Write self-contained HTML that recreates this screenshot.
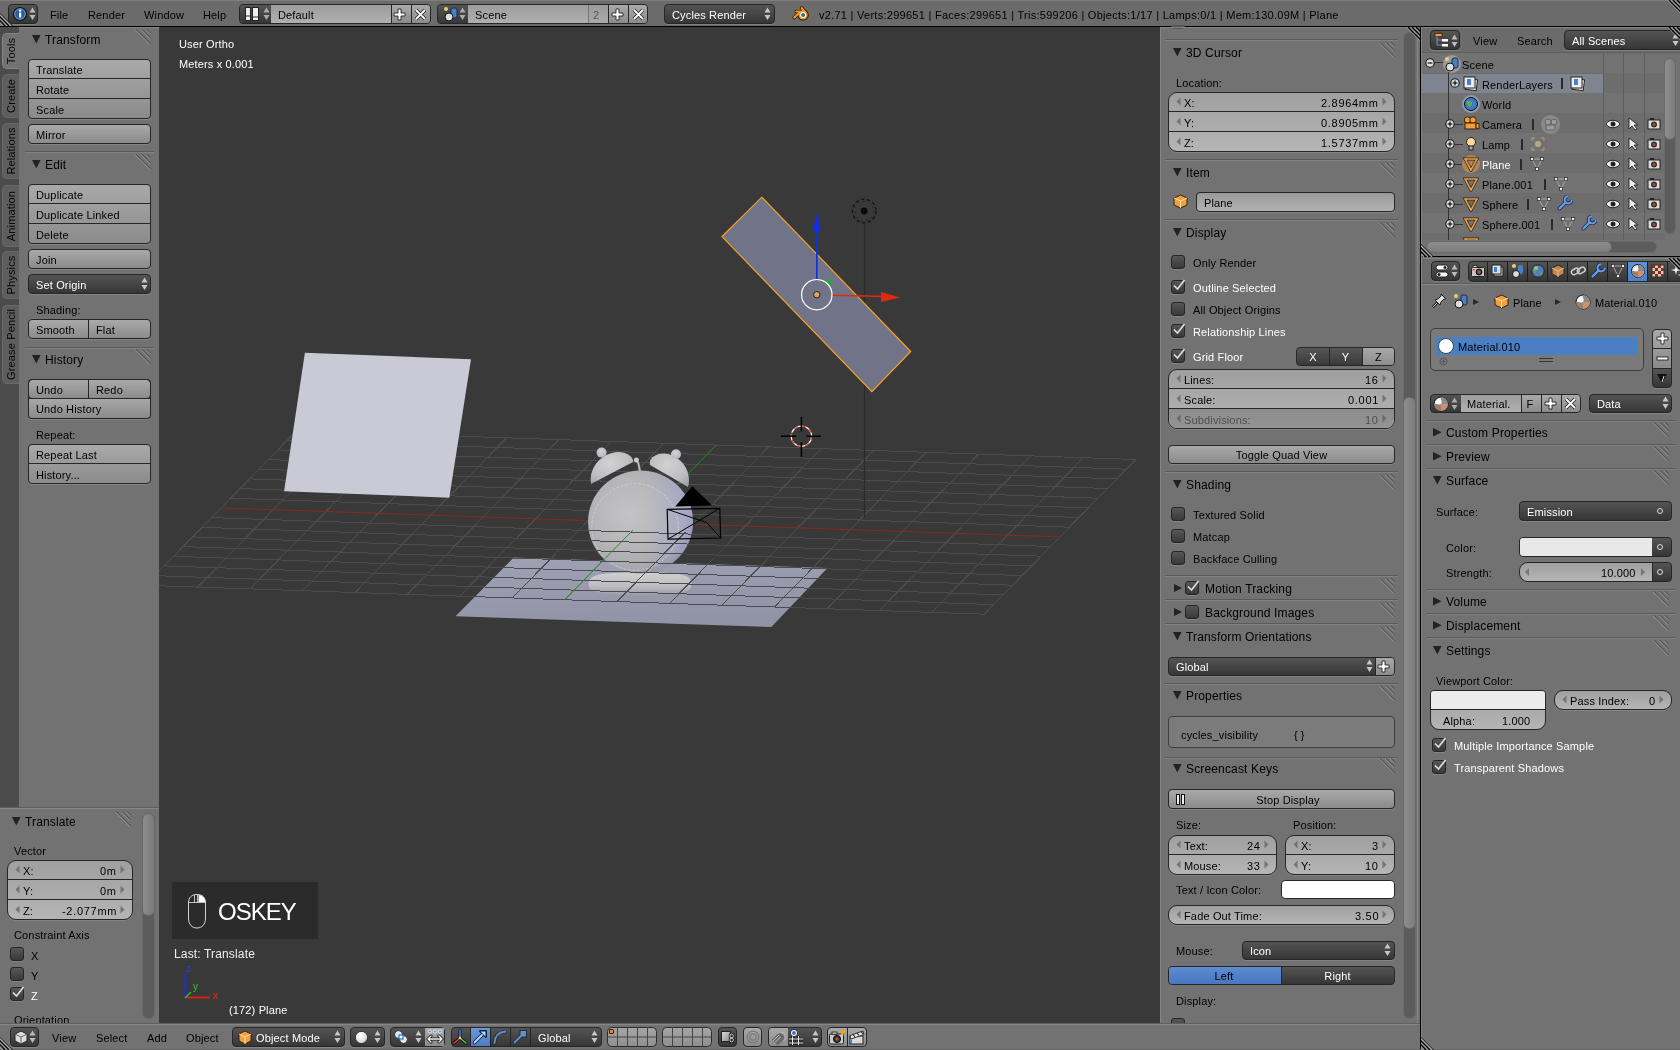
<!DOCTYPE html><html><head><meta charset='utf-8'><style>
*{box-sizing:border-box}
body{margin:0;width:1680px;height:1050px;overflow:hidden;position:relative;background:#727272;font-family:"Liberation Sans",sans-serif;font-size:11px;letter-spacing:0.15px;color:#000}
.a{position:absolute}
.t{line-height:20px;height:20px;white-space:nowrap;will-change:transform}
.w{color:#fff}
.tool{background:linear-gradient(#a9a9a9,#8b8b8b);border:1px solid #262626;border-radius:4px;box-shadow:0 1px 0 rgba(255,255,255,0.13)}
.num{background:linear-gradient(#9f9f9f,#b5b5b5);border:1px solid #262626;border-radius:9px;box-shadow:0 1px 0 rgba(255,255,255,0.13)}
.menu{background:linear-gradient(#545454,#363636);border:1px solid #262626;border-radius:4px;box-shadow:0 1px 0 rgba(255,255,255,0.13)}
.opt{background:linear-gradient(#575757,#393939);border:1px solid #262626;border-radius:3px;box-shadow:0 1px 0 rgba(255,255,255,0.13)}
.txtf{background:linear-gradient(#999,#b3b3b3);border:1px solid #262626;border-radius:4px;box-shadow:0 1px 0 rgba(255,255,255,0.13)}
.sep{height:2px;border-top:1px solid #5f5f5f;border-bottom:1px solid #848484}
</style></head><body><div class="a " style="left:0px;top:0px;width:1680px;height:26px;background:#6b6b6b;border-top:1px solid #7e7e7e"></div>
<div class="a " style="left:0px;top:26px;width:1680px;height:1px;background:#000"></div>
<div class="a " style="left:0px;top:27px;width:159px;height:780px;background:#727272"></div>
<div class="a " style="left:0px;top:27px;width:19px;height:781px;background:#4b4b4b"></div>
<div class="a " style="left:0px;top:807px;width:159px;height:216px;background:#727272"></div>
<div class="a " style="left:159px;top:27px;width:1001px;height:996px;background:#393939"></div>
<div class="a " style="left:1160px;top:27px;width:260px;height:996px;background:#727272"></div>
<div class="a " style="left:0px;top:1023px;width:1420px;height:27px;background:#727272"></div>
<div class="a " style="left:1420px;top:27px;width:1px;height:1023px;background:#000"></div>
<div class="a " style="left:1421px;top:27px;width:259px;height:229px;background:#727272"></div>
<div class="a " style="left:1421px;top:256px;width:259px;height:1px;background:#000"></div>
<div class="a " style="left:1421px;top:257px;width:259px;height:793px;background:#727272"></div>
<div class="a" style="left:2px;top:33px;width:17px;height:36px;background:#727272;border-radius:5px 0 0 5px;border:1px solid #858585;border-right:none"></div>
<div class="a t" style="left:3px;top:69px;width:36px;height:17px;line-height:17px;text-align:center;transform-origin:0 0;transform:rotate(-90deg);color:#000">Tools</div>
<div class="a" style="left:2px;top:74px;width:17px;height:44px;background:#5e5e5e;border-radius:5px 0 0 5px;border:1px solid #686868;border-right:none"></div>
<div class="a t" style="left:3px;top:118px;width:44px;height:17px;line-height:17px;text-align:center;transform-origin:0 0;transform:rotate(-90deg);color:#000">Create</div>
<div class="a" style="left:2px;top:123px;width:17px;height:56px;background:#5e5e5e;border-radius:5px 0 0 5px;border:1px solid #686868;border-right:none"></div>
<div class="a t" style="left:3px;top:179px;width:56px;height:17px;line-height:17px;text-align:center;transform-origin:0 0;transform:rotate(-90deg);color:#000">Relations</div>
<div class="a" style="left:2px;top:185px;width:17px;height:62px;background:#5e5e5e;border-radius:5px 0 0 5px;border:1px solid #686868;border-right:none"></div>
<div class="a t" style="left:3px;top:247px;width:62px;height:17px;line-height:17px;text-align:center;transform-origin:0 0;transform:rotate(-90deg);color:#000">Animation</div>
<div class="a" style="left:2px;top:251px;width:17px;height:48px;background:#5e5e5e;border-radius:5px 0 0 5px;border:1px solid #686868;border-right:none"></div>
<div class="a t" style="left:3px;top:299px;width:48px;height:17px;line-height:17px;text-align:center;transform-origin:0 0;transform:rotate(-90deg);color:#000">Physics</div>
<div class="a" style="left:2px;top:305px;width:17px;height:79px;background:#5e5e5e;border-radius:5px 0 0 5px;border:1px solid #686868;border-right:none"></div>
<div class="a t" style="left:3px;top:384px;width:79px;height:17px;line-height:17px;text-align:center;transform-origin:0 0;transform:rotate(-90deg);color:#000">Grease Pencil</div>
<svg class="a" style="left:32px;top:35px" width="9.6" height="9.6"><polygon points="0,0 8.6,0 4.3,8.6" fill="#222"/></svg>
<div class="a t " style="left:45px;top:30px;font-size:12px">Transform</div>
<svg class="a" style="left:134px;top:28px" width="18" height="18"><g stroke="#555" stroke-width="1"><line x1="2" y1="1" x2="17" y2="16"/><line x1="8" y1="1" x2="17" y2="10"/><line x1="13" y1="1" x2="17" y2="5"/></g><g stroke="#8a8a8a" stroke-width="1"><line x1="1" y1="2" x2="16" y2="17"/><line x1="7" y1="2" x2="16" y2="11"/><line x1="12" y1="2" x2="16" y2="6"/></g></svg>
<div class="a tool" style="left:28px;top:59px;width:123px;height:60px"></div>
<div class="a t " style="left:36px;top:60px;">Translate</div>
<div class="a " style="left:28px;top:78px;width:123px;height:1px;background:#262626"></div>
<div class="a t " style="left:36px;top:80px;">Rotate</div>
<div class="a " style="left:28px;top:98px;width:123px;height:1px;background:#262626"></div>
<div class="a t " style="left:36px;top:100px;">Scale</div>
<div class="a tool" style="left:28px;top:124px;width:123px;height:20px"></div>
<div class="a t " style="left:36px;top:125px;">Mirror</div>
<div class="a" style="left:25px;top:151px;width:129px;height:1px;background:#5a5a5a"></div><div class="a" style="left:25px;top:152px;width:129px;height:1px;background:#828282"></div>
<svg class="a" style="left:32px;top:160px" width="9.6" height="9.6"><polygon points="0,0 8.6,0 4.3,8.6" fill="#222"/></svg>
<div class="a t " style="left:45px;top:155px;font-size:12px">Edit</div>
<svg class="a" style="left:134px;top:153px" width="18" height="18"><g stroke="#555" stroke-width="1"><line x1="2" y1="1" x2="17" y2="16"/><line x1="8" y1="1" x2="17" y2="10"/><line x1="13" y1="1" x2="17" y2="5"/></g><g stroke="#8a8a8a" stroke-width="1"><line x1="1" y1="2" x2="16" y2="17"/><line x1="7" y1="2" x2="16" y2="11"/><line x1="12" y1="2" x2="16" y2="6"/></g></svg>
<div class="a tool" style="left:28px;top:184px;width:123px;height:60px"></div>
<div class="a t " style="left:36px;top:185px;">Duplicate</div>
<div class="a " style="left:28px;top:203px;width:123px;height:1px;background:#262626"></div>
<div class="a t " style="left:36px;top:205px;">Duplicate Linked</div>
<div class="a " style="left:28px;top:223px;width:123px;height:1px;background:#262626"></div>
<div class="a t " style="left:36px;top:225px;">Delete</div>
<div class="a tool" style="left:28px;top:249px;width:123px;height:20px"></div>
<div class="a t " style="left:36px;top:250px;">Join</div>
<div class="a menu" style="left:28px;top:274px;width:123px;height:20px"></div>
<div class="a t w" style="left:36px;top:275px;">Set Origin</div>
<svg class="a" style="left:141px;top:277px" width="7" height="14"><polygon points="0.5,5.5 3.5,0.5 6.5,5.5" fill="#c8c8c8"/><polygon points="0.5,8 3.5,13 6.5,8" fill="#c8c8c8"/></svg>
<div class="a t " style="left:36px;top:300px;">Shading:</div>
<div class="a tool" style="left:28px;top:319px;width:123px;height:20px"></div>
<div class="a t " style="left:36px;top:320px;">Smooth</div>
<div class="a " style="left:88px;top:319px;width:1px;height:20px;background:#262626"></div>
<div class="a t " style="left:96px;top:320px;">Flat</div>
<div class="a" style="left:25px;top:347px;width:129px;height:1px;background:#5a5a5a"></div><div class="a" style="left:25px;top:348px;width:129px;height:1px;background:#828282"></div>
<svg class="a" style="left:32px;top:355px" width="9.6" height="9.6"><polygon points="0,0 8.6,0 4.3,8.6" fill="#222"/></svg>
<div class="a t " style="left:45px;top:350px;font-size:12px">History</div>
<svg class="a" style="left:134px;top:348px" width="18" height="18"><g stroke="#555" stroke-width="1"><line x1="2" y1="1" x2="17" y2="16"/><line x1="8" y1="1" x2="17" y2="10"/><line x1="13" y1="1" x2="17" y2="5"/></g><g stroke="#8a8a8a" stroke-width="1"><line x1="1" y1="2" x2="16" y2="17"/><line x1="7" y1="2" x2="16" y2="11"/><line x1="12" y1="2" x2="16" y2="6"/></g></svg>
<div class="a tool" style="left:28px;top:379px;width:123px;height:20px"></div>
<div class="a t " style="left:36px;top:380px;">Undo</div>
<div class="a " style="left:88px;top:379px;width:1px;height:20px;background:#262626"></div>
<div class="a t " style="left:96px;top:380px;">Redo</div>
<div class="a " style="left:28px;top:398px;width:123px;height:1px;background:#262626"></div>
<div class="a tool" style="left:28px;top:398px;width:123px;height:21px;border-top:none;border-radius:0 0 4px 4px"></div>
<div class="a tool" style="left:28px;top:379px;width:123px;height:20px;border-radius:4px 4px 0 0;background:transparent;box-shadow:none"></div>
<div class="a t " style="left:36px;top:399px;">Undo History</div>
<div class="a t " style="left:36px;top:425px;">Repeat:</div>
<div class="a tool" style="left:28px;top:444px;width:123px;height:40px"></div>
<div class="a t " style="left:36px;top:445px;">Repeat Last</div>
<div class="a " style="left:28px;top:463px;width:123px;height:1px;background:#262626"></div>
<div class="a t " style="left:36px;top:465px;">History...</div>
<div class="a " style="left:0px;top:807px;width:159px;height:1px;background:#5e5e5e"></div>
<div class="a " style="left:0px;top:808px;width:159px;height:1px;background:#888"></div>
<svg class="a" style="left:12px;top:817px" width="9.6" height="9.6"><polygon points="0,0 8.6,0 4.3,8.6" fill="#222"/></svg>
<div class="a t " style="left:25px;top:812px;font-size:12px">Translate</div>
<svg class="a" style="left:114px;top:810px" width="18" height="18"><g stroke="#555" stroke-width="1"><line x1="2" y1="1" x2="17" y2="16"/><line x1="8" y1="1" x2="17" y2="10"/><line x1="13" y1="1" x2="17" y2="5"/></g><g stroke="#8a8a8a" stroke-width="1"><line x1="1" y1="2" x2="16" y2="17"/><line x1="7" y1="2" x2="16" y2="11"/><line x1="12" y1="2" x2="16" y2="6"/></g></svg>
<div class="a" style="left:142px;top:813px;width:13px;height:206px;border-radius:6px;background:#5c5c5c;border:1px solid #6a6a6a"></div>
<div class="a" style="left:142px;top:813px;width:13px;height:103px;border-radius:6px;background:linear-gradient(90deg,#8c8c8c,#7a7a7a);border:1px solid #666"></div>
<div class="a t " style="left:14px;top:841px;">Vector</div>
<div class="a num" style="left:7px;top:860px;width:126px;height:60px;overflow:hidden"></div>
<svg class="a" style="left:15px;top:865px" width="6" height="9"><polygon points="4.5,0.5 0.5,4.5 4.5,8.5" fill="#747474"/></svg>
<svg class="a" style="left:120px;top:865px" width="6" height="9"><polygon points="0.5,0.5 4.5,4.5 0.5,8.5" fill="#747474"/></svg>
<div class="a t " style="left:23px;top:861px;">X:</div>
<div class="a t " style="right:1563px;top:861px;;letter-spacing:0.7px">0m</div>
<div class="a " style="left:7px;top:879px;width:126px;height:1px;background:#262626"></div>
<svg class="a" style="left:15px;top:885px" width="6" height="9"><polygon points="4.5,0.5 0.5,4.5 4.5,8.5" fill="#747474"/></svg>
<svg class="a" style="left:120px;top:885px" width="6" height="9"><polygon points="0.5,0.5 4.5,4.5 0.5,8.5" fill="#747474"/></svg>
<div class="a t " style="left:23px;top:881px;">Y:</div>
<div class="a t " style="right:1563px;top:881px;;letter-spacing:0.7px">0m</div>
<div class="a " style="left:7px;top:899px;width:126px;height:1px;background:#262626"></div>
<svg class="a" style="left:15px;top:905px" width="6" height="9"><polygon points="4.5,0.5 0.5,4.5 4.5,8.5" fill="#747474"/></svg>
<svg class="a" style="left:120px;top:905px" width="6" height="9"><polygon points="0.5,0.5 4.5,4.5 0.5,8.5" fill="#747474"/></svg>
<div class="a t " style="left:23px;top:901px;">Z:</div>
<div class="a t " style="right:1563px;top:901px;;letter-spacing:0.7px">-2.077mm</div>
<div class="a t " style="left:14px;top:925px;">Constraint Axis</div>
<div class="a opt" style="left:10px;top:947px;width:14px;height:14px"></div>
<div class="a t " style="left:31px;top:946px;">X</div>
<div class="a opt" style="left:10px;top:967px;width:14px;height:14px"></div>
<div class="a t " style="left:31px;top:966px;">Y</div>
<div class="a opt" style="left:10px;top:987px;width:14px;height:14px"></div>
<svg class="a" style="left:10px;top:985px" width="16" height="16"><polyline points="3,7.5 6.5,11 13.5,2" fill="none" stroke="#dcdcdc" stroke-width="1.7"/></svg>
<div class="a t w" style="left:31px;top:986px;">Z</div>
<div class="a t " style="left:14px;top:1010px;">Orientation</div>
<div class="a " style="left:0px;top:1023px;width:159px;height:1px;background:#727272"></div>
<div class="a menu" style="left:8px;top:4px;width:30px;height:20px"></div>
<svg class="a" style="left:12px;top:6px" width="16" height="16"><circle cx="8" cy="8" r="6.5" fill="#2a5f9e" stroke="#111" stroke-width="1.2"/><circle cx="8" cy="8" r="5.3" fill="none" stroke="#7fa6d6" stroke-width="0.8"/><rect x="7" y="6.5" width="2.2" height="5" fill="#fff"/><circle cx="8.1" cy="4.6" r="1.2" fill="#fff"/></svg>
<svg class="a" style="left:29px;top:7px" width="7" height="14"><polygon points="0.5,5.5 3.5,0.5 6.5,5.5" fill="#bbb"/><polygon points="0.5,8 3.5,13 6.5,8" fill="#bbb"/></svg>
<div class="a t " style="left:50px;top:5px;">File</div>
<div class="a t " style="left:88px;top:5px;">Render</div>
<div class="a t " style="left:144px;top:5px;">Window</div>
<div class="a t " style="left:203px;top:5px;">Help</div>
<div class="a" style="left:239px;top:4px;width:192px;height:20px;border:1px solid #262626;border-radius:4px;overflow:hidden;background:#444"><div class="a" style="left:0;top:0;width:31px;height:18px;background:linear-gradient(#545454,#363636)"></div><div class="a" style="left:31px;top:0;width:120px;height:18px;background:linear-gradient(#9c9c9c,#b0b0b0)"></div><div class="a" style="left:151px;top:0;width:1px;height:18px;background:#262626"></div><div class="a" style="left:152px;top:0;width:19px;height:18px;background:linear-gradient(#a9a9a9,#8b8b8b)"></div><div class="a" style="left:171px;top:0;width:1px;height:18px;background:#262626"></div><div class="a" style="left:172px;top:0;width:20px;height:18px;background:linear-gradient(#a9a9a9,#8b8b8b)"></div></div>
<svg class="a" style="left:245px;top:7px" width="14" height="14"><rect x="0.5" y="0.5" width="5" height="13" fill="#eee" stroke="#222"/><rect x="7.5" y="0.5" width="6" height="13" fill="#eee" stroke="#222"/><line x1="1" y1="9" x2="5" y2="9" stroke="#333"/><line x1="8" y1="10" x2="13" y2="10" stroke="#333"/></svg>
<svg class="a" style="left:263px;top:7px" width="7" height="14"><polygon points="0.5,5.5 3.5,0.5 6.5,5.5" fill="#aaa"/><polygon points="0.5,8 3.5,13 6.5,8" fill="#aaa"/></svg>
<div class="a t " style="left:278px;top:5px;">Default</div>
<svg class="a" style="left:393px;top:8px" width="13" height="13"><path d="M5 1h3v4h4v3h-4v4h-3v-4h-4v-3h4z" fill="#fff" stroke="#222" stroke-width="0.9"/></svg>
<svg class="a" style="left:414px;top:8px" width="13" height="13"><path d="M2 2L11 11M11 2L2 11" stroke="#222" stroke-width="3.4"/><path d="M2 2L11 11M11 2L2 11" stroke="#fff" stroke-width="1.8"/></svg>
<div class="a" style="left:437px;top:4px;width:211px;height:20px;border:1px solid #262626;border-radius:4px;overflow:hidden;background:#444"><div class="a" style="left:0;top:0;width:30px;height:18px;background:linear-gradient(#545454,#363636)"></div><div class="a" style="left:30px;top:0;width:120px;height:18px;background:linear-gradient(#9c9c9c,#b0b0b0)"></div><div class="a" style="left:150px;top:0;width:20px;height:18px;background:linear-gradient(#9a9a9a,#aaaaaa)"></div><div class="a" style="left:150px;top:0;width:1px;height:18px;background:#777"></div><div class="a" style="left:170px;top:0;width:1px;height:18px;background:#262626"></div><div class="a" style="left:171px;top:0;width:19px;height:18px;background:linear-gradient(#a9a9a9,#8b8b8b)"></div><div class="a" style="left:190px;top:0;width:1px;height:18px;background:#262626"></div><div class="a" style="left:191px;top:0;width:20px;height:18px;background:linear-gradient(#a9a9a9,#8b8b8b)"></div></div>
<svg class="a" style="left:443px;top:6px" width="16" height="16"><circle cx="3" cy="3" r="2" fill="#e8d070"/><rect x="8" y="2" width="6" height="10" rx="2" fill="#4c7fc0" stroke="#1a2a50"/><circle cx="6" cy="11" r="4" fill="#ddd" stroke="#111"/></svg>
<svg class="a" style="left:459px;top:7px" width="7" height="14"><polygon points="0.5,5.5 3.5,0.5 6.5,5.5" fill="#aaa"/><polygon points="0.5,8 3.5,13 6.5,8" fill="#aaa"/></svg>
<div class="a t " style="left:475px;top:5px;">Scene</div>
<div class="a t " style="left:593px;top:5px;color:#555">2</div>
<svg class="a" style="left:611px;top:8px" width="13" height="13"><path d="M5 1h3v4h4v3h-4v4h-3v-4h-4v-3h4z" fill="#fff" stroke="#222" stroke-width="0.9"/></svg>
<svg class="a" style="left:632px;top:8px" width="13" height="13"><path d="M2 2L11 11M11 2L2 11" stroke="#222" stroke-width="3.4"/><path d="M2 2L11 11M11 2L2 11" stroke="#fff" stroke-width="1.8"/></svg>
<div class="a menu" style="left:664px;top:4px;width:111px;height:20px"></div>
<div class="a t w" style="left:672px;top:5px;">Cycles Render</div>
<svg class="a" style="left:764px;top:7px" width="7" height="14"><polygon points="0.5,5.5 3.5,0.5 6.5,5.5" fill="#c8c8c8"/><polygon points="0.5,8 3.5,13 6.5,8" fill="#c8c8c8"/></svg>
<svg class="a" style="left:788px;top:2px" width="24" height="24"><g stroke="#2a1500" stroke-linecap="round" fill="none"><path d="M13.7 6.2 L17 10" stroke-width="3.6"/><path d="M8.2 9.4 L13 9.6" stroke-width="3.4"/><path d="M6.2 15.5 L11 11" stroke-width="3.6"/><circle cx="15.1" cy="13" r="5" stroke-width="1.2" fill="#2a1500"/></g><g stroke="#f39a1c" stroke-linecap="round" fill="none"><path d="M13.7 6.2 L17 10" stroke-width="2.2"/><path d="M8.2 9.4 L13 9.6" stroke-width="2"/><path d="M6.2 15.5 L11 11" stroke-width="2.2"/></g><circle cx="15.1" cy="13" r="4.6" fill="#f39a1c"/><circle cx="15.1" cy="13" r="2.9" fill="#fff"/><circle cx="15.1" cy="13" r="1.9" fill="#2a64b0"/></svg>
<div class="a t " style="left:819px;top:5px;letter-spacing:0.27px">v2.71 | Verts:299651 | Faces:299651 | Tris:599206 | Objects:1/17 | Lamps:0/1 | Mem:130.09M | Plane</div>
<svg class="a" style="left:159px;top:27px" width="1001" height="996" viewBox="159 27 1001 996"><defs><linearGradient id="gp" x1="0" y1="0" x2="0.3" y2="1"><stop offset="0" stop-color="#a0a1b5"/><stop offset="1" stop-color="#9193a6"/></linearGradient><radialGradient id="gb" cx="0.42" cy="0.38" r="0.65"><stop offset="0" stop-color="#d6d6d8"/><stop offset="0.6" stop-color="#b9b9bc"/><stop offset="0.9" stop-color="#9c9ca4"/><stop offset="1" stop-color="#8a8a96"/></radialGradient><radialGradient id="gd" cx="0.4" cy="0.3" r="0.8"><stop offset="0" stop-color="#dcdcde"/><stop offset="0.7" stop-color="#b4b4b8"/><stop offset="1" stop-color="#8e8e98"/></radialGradient><linearGradient id="gbase" x1="0" y1="0" x2="0" y2="1"><stop offset="0" stop-color="#c8c8cc"/><stop offset="1" stop-color="#a8a8b0"/></linearGradient></defs><polygon points="455.5,616.3 513.8,557.5 827.5,568 771.3,627" fill="url(#gp)"/><g stroke="#4c4c4c" stroke-width="1" shape-rendering="crispEdges"><line x1="145.1" y1="585.3" x2="984.2" y2="614.2"/><line x1="145.1" y1="585.3" x2="296.8" y2="430.6"/><line x1="154.6" y1="575.6" x2="993.7" y2="604.6"/><line x1="197.6" y1="587.1" x2="349.3" y2="432.4"/><line x1="164.1" y1="565.9" x2="1003.1" y2="594.9"/><line x1="250.0" y1="588.9" x2="401.7" y2="434.2"/><line x1="173.6" y1="556.3" x2="1012.6" y2="585.2"/><line x1="302.5" y1="590.7" x2="454.1" y2="436.0"/><line x1="183.1" y1="546.6" x2="1022.1" y2="575.6"/><line x1="354.9" y1="592.5" x2="506.6" y2="437.8"/><line x1="192.5" y1="536.9" x2="1031.6" y2="565.9"/><line x1="407.3" y1="594.3" x2="559.0" y2="439.6"/><line x1="202.0" y1="527.3" x2="1041.1" y2="556.2"/><line x1="459.8" y1="596.1" x2="611.5" y2="441.4"/><line x1="211.5" y1="517.6" x2="1050.5" y2="546.5"/><line x1="512.2" y1="598.0" x2="663.9" y2="443.2"/><line x1="230.5" y1="498.2" x2="1069.5" y2="527.2"/><line x1="617.1" y1="601.6" x2="768.8" y2="446.8"/><line x1="239.9" y1="488.6" x2="1079.0" y2="517.5"/><line x1="669.5" y1="603.4" x2="821.2" y2="448.7"/><line x1="249.4" y1="478.9" x2="1088.5" y2="507.9"/><line x1="722.0" y1="605.2" x2="873.7" y2="450.5"/><line x1="258.9" y1="469.2" x2="1097.9" y2="498.2"/><line x1="774.4" y1="607.0" x2="926.1" y2="452.3"/><line x1="268.4" y1="459.6" x2="1107.4" y2="488.5"/><line x1="826.9" y1="608.8" x2="978.5" y2="454.1"/><line x1="277.9" y1="449.9" x2="1116.9" y2="478.9"/><line x1="879.3" y1="610.6" x2="1031.0" y2="455.9"/><line x1="287.3" y1="440.2" x2="1126.4" y2="469.2"/><line x1="931.7" y1="612.4" x2="1083.4" y2="457.7"/><line x1="296.8" y1="430.6" x2="1135.9" y2="459.5"/><line x1="984.2" y1="614.2" x2="1135.9" y2="459.5"/></g><line x1="221.0" y1="507.9" x2="1060.0" y2="536.9" stroke="#8a2a22" stroke-width="1"/><line x1="564.7" y1="599.8" x2="716.3" y2="445.0" stroke="#2a8a2a" stroke-width="1"/><defs><radialGradient id="gb2" cx="0.4" cy="0.42" r="0.62"><stop offset="0" stop-color="#c4c4c6"/><stop offset="0.55" stop-color="#b6b6b9"/><stop offset="0.85" stop-color="#a9a9b0"/><stop offset="1" stop-color="#9090a0"/></radialGradient><linearGradient id="gbl" x1="0" y1="0" x2="1" y2="0"><stop offset="0.55" stop-color="#a8a8d8" stop-opacity="0"/><stop offset="1" stop-color="#a8a8e0" stop-opacity="0.55"/></linearGradient><linearGradient id="gbase2" x1="0" y1="0" x2="0" y2="1"><stop offset="0" stop-color="#cfcfd2"/><stop offset="0.6" stop-color="#bdbdc2"/><stop offset="1" stop-color="#9c9caa"/></linearGradient><radialGradient id="gd2" cx="0.45" cy="0.35" r="0.75"><stop offset="0" stop-color="#d2d2d4"/><stop offset="0.7" stop-color="#bcbcc0"/><stop offset="1" stop-color="#a0a0aa"/></radialGradient></defs><path d="M588.6,584 C589,574 600,572.5 640,572.5 C680,572.5 691.5,574 691.5,584 C691.5,592 684,595 640,595 C596,595 588.6,592 588.6,584 Z" fill="url(#gbase2)"/><ellipse cx="640.5" cy="522" rx="52.5" ry="51.5" fill="url(#gb2)"/><ellipse cx="640.5" cy="522" rx="52.5" ry="51.5" fill="url(#gbl)"/><circle cx="635" cy="527" r="43.3" fill="none" stroke="#d0d0d2" stroke-width="0.8" stroke-dasharray="3,1.5"/><path d="M591,484 C588,466 604,452 618,452 C628,452 634,458 633,462 Z" fill="url(#gd2)"/><path d="M650,465 C648,456 660,452 668,454 C684,458 692,474 688,487 Z" fill="url(#gd2)"/><line x1="638" y1="462" x2="640" y2="471" stroke="#bbb" stroke-width="2"/><circle cx="601.6" cy="452.6" r="5" fill="url(#gd2)"/><circle cx="676" cy="454.3" r="5" fill="url(#gd2)"/><circle cx="636.4" cy="460" r="2.5" fill="#ccc"/><g stroke="#4c4c4c" stroke-width="1" shape-rendering="crispEdges"><line x1="145.1" y1="585.3" x2="984.2" y2="614.2"/><line x1="145.1" y1="585.3" x2="213.4" y2="515.7"/><line x1="154.6" y1="575.6" x2="993.7" y2="604.6"/><line x1="197.6" y1="587.1" x2="265.8" y2="517.5"/><line x1="164.1" y1="565.9" x2="1003.1" y2="594.9"/><line x1="250.0" y1="588.9" x2="318.3" y2="519.3"/><line x1="173.6" y1="556.3" x2="1012.6" y2="585.2"/><line x1="302.5" y1="590.7" x2="370.7" y2="521.1"/><line x1="183.1" y1="546.6" x2="1022.1" y2="575.6"/><line x1="354.9" y1="592.5" x2="423.2" y2="522.9"/><line x1="192.5" y1="536.9" x2="1031.6" y2="565.9"/><line x1="407.3" y1="594.3" x2="475.6" y2="524.7"/><line x1="202.0" y1="527.3" x2="1041.1" y2="556.2"/><line x1="459.8" y1="596.1" x2="528.0" y2="526.5"/><line x1="211.5" y1="517.6" x2="1050.5" y2="546.5"/><line x1="512.2" y1="598.0" x2="580.5" y2="528.3"/><line x1="617.1" y1="601.6" x2="685.4" y2="531.9"/><line x1="669.5" y1="603.4" x2="737.8" y2="533.8"/><line x1="722.0" y1="605.2" x2="790.2" y2="535.6"/><line x1="774.4" y1="607.0" x2="842.7" y2="537.4"/><line x1="826.9" y1="608.8" x2="895.1" y2="539.2"/><line x1="879.3" y1="610.6" x2="947.6" y2="541.0"/><line x1="931.7" y1="612.4" x2="1000.0" y2="542.8"/><line x1="984.2" y1="614.2" x2="1052.4" y2="544.6"/></g><line x1="564.7" y1="599.8" x2="632.9" y2="530.1" stroke="#2a8a2a" stroke-width="1"/><polygon points="304.9,352.8 471,359.3 449.3,497.7 284.1,491.2" fill="#c9cad6"/><polygon points="675.3,506.4 692.3,486.2 712.2,505.6" fill="#000"/><polygon points="667.2,509.3 719.8,508.3 720.6,538 668,539.1" fill="none" stroke="#000" stroke-width="1.2"/><polyline points="667.2,509.3 706.8,522.6 720.6,538" fill="none" stroke="#000" stroke-width="1"/><line x1="668" y1="539.1" x2="719.8" y2="508.3" stroke="#000" stroke-width="1"/><line x1="864.5" y1="223" x2="864.5" y2="517" stroke="#2a2a2a" stroke-width="1.2"/><polygon points="761.8,197.2 910.7,351.5 871.9,391.7 722,236.6" fill="#717489" stroke="#ffa51c" stroke-width="1.15"/><line x1="816.8" y1="280" x2="816.8" y2="228" stroke="#1030e0" stroke-width="1.6"/><polygon points="812.5,231 816.8,213 821,231" fill="#1030e0"/><line x1="832" y1="295.2" x2="885" y2="296.5" stroke="#e02a10" stroke-width="1.6"/><polygon points="881,292 900,297.4 881,302" fill="#e02a10"/><circle cx="829" cy="282.3" r="3.6" fill="#3a9a50"/><circle cx="816.8" cy="294.7" r="15.2" fill="none" stroke="#fff" stroke-width="1.2"/><circle cx="816.8" cy="294.7" r="3.2" fill="#e8a060" stroke="#222" stroke-width="1"/><circle cx="864.2" cy="211" r="11.8" fill="none" stroke="#111" stroke-width="1.3" stroke-dasharray="3.2,2.6"/><circle cx="864.2" cy="211" r="9.6" fill="none" stroke="#1a1a1a" stroke-width="0.8" stroke-dasharray="1.5,4"/><circle cx="864.2" cy="211" r="3.4" fill="#0a0a0a"/><circle cx="801.4" cy="436.2" r="10.2" fill="none" stroke="#fff" stroke-width="1.1"/><circle cx="801.4" cy="436.2" r="10.2" fill="none" stroke="#f02a10" stroke-width="1.1" stroke-dasharray="4,4"/><g stroke="#000" stroke-width="1.5"><line x1="781" y1="436.2" x2="796" y2="436.2"/><line x1="806.5" y1="436.2" x2="821" y2="436.2"/><line x1="801.4" y1="417" x2="801.4" y2="431.5"/><line x1="801.4" y1="442" x2="801.4" y2="457"/></g></svg>
<div class="a t w" style="left:179px;top:34px;">User Ortho</div>
<div class="a t w" style="left:179px;top:54px;">Meters x 0.001</div>
<div class="a " style="left:172px;top:882px;width:146px;height:57px;background:#2b2b2b"></div>
<svg class="a" style="left:186px;top:892px" width="22" height="38"><path d="M11 2.5 C16.5 2.5 19.5 5.5 19.5 11 L19.5 26 C19.5 32.5 16 36 11 36 C6 36 2.5 32.5 2.5 26 L2.5 11 C2.5 5.5 5.5 2.5 11 2.5 Z" fill="none" stroke="#e8e8e8" stroke-width="0.9"/><path d="M2.6 10.5 L19.4 10.5 M8.5 3 L8.5 10.5 M11.5 3 L11.5 10.5" stroke="#e8e8e8" stroke-width="0.8" fill="none"/><path d="M12.5 3 C16.5 3.2 19 5.5 19.2 10 L12.5 10 Z" fill="#fff"/></svg>
<div class="a t w" style="left:218px;top:907px;font-size:24px;letter-spacing:-1px;line-height:30px;height:30px;top:897px">OSKEY</div>
<div class="a t " style="left:174px;top:944px;font-size:12px;color:#eee">Last: Translate</div>
<svg class="a" style="left:180px;top:963px" width="45" height="40"><line x1="5.5" y1="10" x2="5.5" y2="35" stroke="#1c2ce0" stroke-width="2"/><line x1="5" y1="34.5" x2="30" y2="34.5" stroke="#d8200e" stroke-width="2"/><line x1="5" y1="35" x2="11" y2="29" stroke="#20c020" stroke-width="1.5"/><text x="6" y="9" font-size="10" fill="#2a3ae8" font-family="Liberation Sans">z</text><text x="13" y="27" font-size="10" fill="#2ac82a" font-family="Liberation Sans">y</text><text x="33" y="36" font-size="10" fill="#e0301a" font-family="Liberation Sans">x</text></svg>
<div class="a t w" style="left:229px;top:1000px;">(172) Plane</div>
<div class="a " style="left:1160px;top:27px;width:1px;height:996px;background:#858585"></div>
<div class="a" style="left:1171px;top:25px;width:14px;height:4px;background:#555;border-radius:0 0 4px 4px"></div>
<div class="a" style="left:1403px;top:32px;width:13px;height:987px;border-radius:6px;background:#5c5c5c;border:1px solid #6c6c6c"></div>
<div class="a" style="left:1403px;top:397px;width:13px;height:532px;border-radius:6px;background:linear-gradient(90deg,#8e8e8e,#7c7c7c);border:1px solid #6a6a6a"></div>
<div class="a " style="left:1417px;top:27px;width:1px;height:996px;background:#858585"></div>
<div class="a" style="left:1165px;top:39px;width:233px;height:1px;background:#5a5a5a"></div><div class="a" style="left:1165px;top:40px;width:233px;height:1px;background:#828282"></div>
<svg class="a" style="left:1173px;top:48px" width="9.6" height="9.6"><polygon points="0,0 8.6,0 4.3,8.6" fill="#222"/></svg>
<div class="a t " style="left:1186px;top:43px;font-size:12px">3D Cursor</div>
<svg class="a" style="left:1378px;top:41px" width="18" height="18"><g stroke="#555" stroke-width="1"><line x1="2" y1="1" x2="17" y2="16"/><line x1="8" y1="1" x2="17" y2="10"/><line x1="13" y1="1" x2="17" y2="5"/></g><g stroke="#8a8a8a" stroke-width="1"><line x1="1" y1="2" x2="16" y2="17"/><line x1="7" y1="2" x2="16" y2="11"/><line x1="12" y1="2" x2="16" y2="6"/></g></svg>
<div class="a t " style="left:1176px;top:73px;">Location:</div>
<div class="a num" style="left:1168px;top:92px;width:227px;height:60px;overflow:hidden"></div>
<svg class="a" style="left:1176px;top:97px" width="6" height="9"><polygon points="4.5,0.5 0.5,4.5 4.5,8.5" fill="#747474"/></svg>
<svg class="a" style="left:1382px;top:97px" width="6" height="9"><polygon points="0.5,0.5 4.5,4.5 0.5,8.5" fill="#747474"/></svg>
<div class="a t " style="left:1184px;top:93px;">X:</div>
<div class="a t " style="right:301px;top:93px;;letter-spacing:0.7px">2.8964mm</div>
<div class="a " style="left:1168px;top:111px;width:227px;height:1px;background:#262626"></div>
<svg class="a" style="left:1176px;top:117px" width="6" height="9"><polygon points="4.5,0.5 0.5,4.5 4.5,8.5" fill="#747474"/></svg>
<svg class="a" style="left:1382px;top:117px" width="6" height="9"><polygon points="0.5,0.5 4.5,4.5 0.5,8.5" fill="#747474"/></svg>
<div class="a t " style="left:1184px;top:113px;">Y:</div>
<div class="a t " style="right:301px;top:113px;;letter-spacing:0.7px">0.8905mm</div>
<div class="a " style="left:1168px;top:131px;width:227px;height:1px;background:#262626"></div>
<svg class="a" style="left:1176px;top:137px" width="6" height="9"><polygon points="4.5,0.5 0.5,4.5 4.5,8.5" fill="#747474"/></svg>
<svg class="a" style="left:1382px;top:137px" width="6" height="9"><polygon points="0.5,0.5 4.5,4.5 0.5,8.5" fill="#747474"/></svg>
<div class="a t " style="left:1184px;top:133px;">Z:</div>
<div class="a t " style="right:301px;top:133px;;letter-spacing:0.7px">1.5737mm</div>
<div class="a" style="left:1165px;top:159px;width:233px;height:1px;background:#5a5a5a"></div><div class="a" style="left:1165px;top:160px;width:233px;height:1px;background:#828282"></div>
<svg class="a" style="left:1173px;top:168px" width="9.6" height="9.6"><polygon points="0,0 8.6,0 4.3,8.6" fill="#222"/></svg>
<div class="a t " style="left:1186px;top:163px;font-size:12px">Item</div>
<svg class="a" style="left:1378px;top:161px" width="18" height="18"><g stroke="#555" stroke-width="1"><line x1="2" y1="1" x2="17" y2="16"/><line x1="8" y1="1" x2="17" y2="10"/><line x1="13" y1="1" x2="17" y2="5"/></g><g stroke="#8a8a8a" stroke-width="1"><line x1="1" y1="2" x2="16" y2="17"/><line x1="7" y1="2" x2="16" y2="11"/><line x1="12" y1="2" x2="16" y2="6"/></g></svg>
<svg class="a" style="left:1173px;top:194px" width="15" height="15"><path d="M7.5 1 L14 4 L14 11 L7.5 14 L1 11 L1 4 Z" fill="#f0a040" stroke="#3a2000"/><path d="M1 4 L7.5 7 L14 4 M7.5 7 L7.5 14" stroke="#fde0b0" fill="none"/></svg>
<div class="a txtf" style="left:1196px;top:192px;width:199px;height:20px"></div>
<div class="a t " style="left:1204px;top:193px;">Plane</div>
<div class="a" style="left:1165px;top:219px;width:233px;height:1px;background:#5a5a5a"></div><div class="a" style="left:1165px;top:220px;width:233px;height:1px;background:#828282"></div>
<svg class="a" style="left:1173px;top:228px" width="9.6" height="9.6"><polygon points="0,0 8.6,0 4.3,8.6" fill="#222"/></svg>
<div class="a t " style="left:1186px;top:223px;font-size:12px">Display</div>
<svg class="a" style="left:1378px;top:221px" width="18" height="18"><g stroke="#555" stroke-width="1"><line x1="2" y1="1" x2="17" y2="16"/><line x1="8" y1="1" x2="17" y2="10"/><line x1="13" y1="1" x2="17" y2="5"/></g><g stroke="#8a8a8a" stroke-width="1"><line x1="1" y1="2" x2="16" y2="17"/><line x1="7" y1="2" x2="16" y2="11"/><line x1="12" y1="2" x2="16" y2="6"/></g></svg>
<div class="a opt" style="left:1171px;top:255px;width:14px;height:14px"></div>
<div class="a t " style="left:1193px;top:253px;">Only Render</div>
<div class="a opt" style="left:1171px;top:280px;width:14px;height:14px"></div>
<svg class="a" style="left:1171px;top:278px" width="16" height="16"><polyline points="3,7.5 6.5,11 13.5,2" fill="none" stroke="#dcdcdc" stroke-width="1.7"/></svg>
<div class="a t w" style="left:1193px;top:278px;">Outline Selected</div>
<div class="a opt" style="left:1171px;top:302px;width:14px;height:14px"></div>
<div class="a t " style="left:1193px;top:300px;">All Object Origins</div>
<div class="a opt" style="left:1171px;top:324px;width:14px;height:14px"></div>
<svg class="a" style="left:1171px;top:322px" width="16" height="16"><polyline points="3,7.5 6.5,11 13.5,2" fill="none" stroke="#dcdcdc" stroke-width="1.7"/></svg>
<div class="a t w" style="left:1193px;top:322px;">Relationship Lines</div>
<div class="a opt" style="left:1171px;top:349px;width:14px;height:14px"></div>
<svg class="a" style="left:1171px;top:347px" width="16" height="16"><polyline points="3,7.5 6.5,11 13.5,2" fill="none" stroke="#dcdcdc" stroke-width="1.7"/></svg>
<div class="a t w" style="left:1193px;top:347px;">Grid Floor</div>
<div class="a" style="left:1296px;top:347px;width:99px;height:19px;border:1px solid #262626;border-radius:4px;overflow:hidden;background:linear-gradient(#575757,#393939)"><div class="a" style="left:65px;top:0;width:34px;height:18px;background:linear-gradient(#a9a9a9,#8b8b8b)"></div><div class="a" style="left:32px;top:0;width:1px;height:18px;background:#262626"></div><div class="a" style="left:65px;top:0;width:1px;height:18px;background:#262626"></div></div>
<div class="a t w" style="left:1297px;width:32px;text-align:center;top:347px;">X</div>
<div class="a t w" style="left:1329px;width:33px;text-align:center;top:347px;">Y</div>
<div class="a t " style="left:1362px;width:33px;text-align:center;top:347px;">Z</div>
<div class="a num" style="left:1168px;top:369px;width:227px;height:60px;overflow:hidden"><div class="a" style="left:0;top:39px;width:227px;height:20px;background:linear-gradient(#8c8c8c,#959595)"></div></div>
<svg class="a" style="left:1176px;top:374px" width="6" height="9"><polygon points="4.5,0.5 0.5,4.5 4.5,8.5" fill="#747474"/></svg>
<svg class="a" style="left:1382px;top:374px" width="6" height="9"><polygon points="0.5,0.5 4.5,4.5 0.5,8.5" fill="#747474"/></svg>
<div class="a t " style="left:1184px;top:370px;">Lines:</div>
<div class="a t " style="right:301px;top:370px;;letter-spacing:0.7px">16</div>
<div class="a " style="left:1168px;top:388px;width:227px;height:1px;background:#262626"></div>
<svg class="a" style="left:1176px;top:394px" width="6" height="9"><polygon points="4.5,0.5 0.5,4.5 4.5,8.5" fill="#747474"/></svg>
<svg class="a" style="left:1382px;top:394px" width="6" height="9"><polygon points="0.5,0.5 4.5,4.5 0.5,8.5" fill="#747474"/></svg>
<div class="a t " style="left:1184px;top:390px;">Scale:</div>
<div class="a t " style="right:301px;top:390px;;letter-spacing:0.7px">0.001</div>
<div class="a " style="left:1168px;top:408px;width:227px;height:1px;background:#262626"></div>
<svg class="a" style="left:1176px;top:414px" width="6" height="9"><polygon points="4.5,0.5 0.5,4.5 4.5,8.5" fill="#6a6a6a"/></svg>
<svg class="a" style="left:1382px;top:414px" width="6" height="9"><polygon points="0.5,0.5 4.5,4.5 0.5,8.5" fill="#6a6a6a"/></svg>
<div class="a t " style="left:1184px;top:410px;color:#4e4e4e">Subdivisions:</div>
<div class="a t " style="right:301px;top:410px;color:#4e4e4e;letter-spacing:0.7px">10</div>
<div class="a tool" style="left:1168px;top:445px;width:227px;height:19px"></div>
<div class="a t " style="left:1168px;width:227px;text-align:center;top:445px;">Toggle Quad View</div>
<div class="a" style="left:1165px;top:471px;width:233px;height:1px;background:#5a5a5a"></div><div class="a" style="left:1165px;top:472px;width:233px;height:1px;background:#828282"></div>
<svg class="a" style="left:1173px;top:480px" width="9.6" height="9.6"><polygon points="0,0 8.6,0 4.3,8.6" fill="#222"/></svg>
<div class="a t " style="left:1186px;top:475px;font-size:12px">Shading</div>
<svg class="a" style="left:1378px;top:473px" width="18" height="18"><g stroke="#555" stroke-width="1"><line x1="2" y1="1" x2="17" y2="16"/><line x1="8" y1="1" x2="17" y2="10"/><line x1="13" y1="1" x2="17" y2="5"/></g><g stroke="#8a8a8a" stroke-width="1"><line x1="1" y1="2" x2="16" y2="17"/><line x1="7" y1="2" x2="16" y2="11"/><line x1="12" y1="2" x2="16" y2="6"/></g></svg>
<div class="a opt" style="left:1171px;top:507px;width:14px;height:14px"></div>
<div class="a t " style="left:1193px;top:505px;">Textured Solid</div>
<div class="a opt" style="left:1171px;top:529px;width:14px;height:14px"></div>
<div class="a t " style="left:1193px;top:527px;">Matcap</div>
<div class="a opt" style="left:1171px;top:551px;width:14px;height:14px"></div>
<div class="a t " style="left:1193px;top:549px;">Backface Culling</div>
<div class="a" style="left:1165px;top:575px;width:233px;height:1px;background:#5a5a5a"></div><div class="a" style="left:1165px;top:576px;width:233px;height:1px;background:#828282"></div>
<svg class="a" style="left:1174px;top:584px" width="9" height="9"><polygon points="0,0 8,4.0 0,8" fill="#222"/></svg>
<div class="a opt" style="left:1185px;top:581px;width:14px;height:14px"></div>
<svg class="a" style="left:1185px;top:579px" width="16" height="16"><polyline points="3,7.5 6.5,11 13.5,2" fill="none" stroke="#dcdcdc" stroke-width="1.7"/></svg>
<div class="a t " style="left:1205px;top:579px;font-size:12px">Motion Tracking</div>
<svg class="a" style="left:1378px;top:577px" width="18" height="18"><g stroke="#555" stroke-width="1"><line x1="2" y1="1" x2="17" y2="16"/><line x1="8" y1="1" x2="17" y2="10"/><line x1="13" y1="1" x2="17" y2="5"/></g><g stroke="#8a8a8a" stroke-width="1"><line x1="1" y1="2" x2="16" y2="17"/><line x1="7" y1="2" x2="16" y2="11"/><line x1="12" y1="2" x2="16" y2="6"/></g></svg>
<div class="a" style="left:1165px;top:599px;width:233px;height:1px;background:#5a5a5a"></div><div class="a" style="left:1165px;top:600px;width:233px;height:1px;background:#828282"></div>
<svg class="a" style="left:1174px;top:608px" width="9" height="9"><polygon points="0,0 8,4.0 0,8" fill="#222"/></svg>
<div class="a opt" style="left:1185px;top:605px;width:14px;height:14px"></div>
<div class="a t " style="left:1205px;top:603px;font-size:12px">Background Images</div>
<svg class="a" style="left:1378px;top:601px" width="18" height="18"><g stroke="#555" stroke-width="1"><line x1="2" y1="1" x2="17" y2="16"/><line x1="8" y1="1" x2="17" y2="10"/><line x1="13" y1="1" x2="17" y2="5"/></g><g stroke="#8a8a8a" stroke-width="1"><line x1="1" y1="2" x2="16" y2="17"/><line x1="7" y1="2" x2="16" y2="11"/><line x1="12" y1="2" x2="16" y2="6"/></g></svg>
<div class="a" style="left:1165px;top:623px;width:233px;height:1px;background:#5a5a5a"></div><div class="a" style="left:1165px;top:624px;width:233px;height:1px;background:#828282"></div>
<svg class="a" style="left:1173px;top:632px" width="9.6" height="9.6"><polygon points="0,0 8.6,0 4.3,8.6" fill="#222"/></svg>
<div class="a t " style="left:1186px;top:627px;font-size:12px">Transform Orientations</div>
<svg class="a" style="left:1378px;top:625px" width="18" height="18"><g stroke="#555" stroke-width="1"><line x1="2" y1="1" x2="17" y2="16"/><line x1="8" y1="1" x2="17" y2="10"/><line x1="13" y1="1" x2="17" y2="5"/></g><g stroke="#8a8a8a" stroke-width="1"><line x1="1" y1="2" x2="16" y2="17"/><line x1="7" y1="2" x2="16" y2="11"/><line x1="12" y1="2" x2="16" y2="6"/></g></svg>
<div class="a menu" style="left:1168px;top:657px;width:227px;height:19px;overflow:hidden"><div class="a" style="left:206px;top:0;width:21px;height:17px;background:linear-gradient(#a9a9a9,#8b8b8b);border-left:1px solid #262626"></div></div>
<div class="a t w" style="left:1176px;top:657px;">Global</div>
<svg class="a" style="left:1366px;top:659px" width="7" height="14"><polygon points="0.5,5.5 3.5,0.5 6.5,5.5" fill="#c8c8c8"/><polygon points="0.5,8 3.5,13 6.5,8" fill="#c8c8c8"/></svg>
<svg class="a" style="left:1377px;top:660px" width="13" height="13"><path d="M5 1h3v4h4v3h-4v4h-3v-4h-4v-3h4z" fill="#fff" stroke="#222" stroke-width="0.9"/></svg>
<div class="a" style="left:1165px;top:683px;width:233px;height:1px;background:#5a5a5a"></div><div class="a" style="left:1165px;top:684px;width:233px;height:1px;background:#828282"></div>
<svg class="a" style="left:1173px;top:691px" width="9.6" height="9.6"><polygon points="0,0 8.6,0 4.3,8.6" fill="#222"/></svg>
<div class="a t " style="left:1186px;top:686px;font-size:12px">Properties</div>
<svg class="a" style="left:1378px;top:684px" width="18" height="18"><g stroke="#555" stroke-width="1"><line x1="2" y1="1" x2="17" y2="16"/><line x1="8" y1="1" x2="17" y2="10"/><line x1="13" y1="1" x2="17" y2="5"/></g><g stroke="#8a8a8a" stroke-width="1"><line x1="1" y1="2" x2="16" y2="17"/><line x1="7" y1="2" x2="16" y2="11"/><line x1="12" y1="2" x2="16" y2="6"/></g></svg>
<div class="a" style="left:1168px;top:716px;width:227px;height:32px;border:1px solid #3e3e3e;border-radius:4px;background:#7b7b7b"></div>
<div class="a t " style="left:1181px;top:725px;">cycles_visibility</div>
<div class="a t " style="left:1294px;top:725px;letter-spacing:0">{ }</div>
<div class="a" style="left:1165px;top:757px;width:233px;height:1px;background:#5a5a5a"></div><div class="a" style="left:1165px;top:758px;width:233px;height:1px;background:#828282"></div>
<svg class="a" style="left:1173px;top:764px" width="9.6" height="9.6"><polygon points="0,0 8.6,0 4.3,8.6" fill="#222"/></svg>
<div class="a t " style="left:1186px;top:759px;font-size:12px">Screencast Keys</div>
<svg class="a" style="left:1378px;top:757px" width="18" height="18"><g stroke="#555" stroke-width="1"><line x1="2" y1="1" x2="17" y2="16"/><line x1="8" y1="1" x2="17" y2="10"/><line x1="13" y1="1" x2="17" y2="5"/></g><g stroke="#8a8a8a" stroke-width="1"><line x1="1" y1="2" x2="16" y2="17"/><line x1="7" y1="2" x2="16" y2="11"/><line x1="12" y1="2" x2="16" y2="6"/></g></svg>
<div class="a tool" style="left:1168px;top:789px;width:227px;height:20px"></div>
<div class="a" style="left:1176px;top:794px;width:4px;height:11px;border:1px solid #111;background:#eee"></div><div class="a" style="left:1181px;top:794px;width:4px;height:11px;border:1px solid #111;background:#eee"></div>
<div class="a t " style="left:1168px;width:240px;text-align:center;top:790px;">Stop Display</div>
<div class="a t " style="left:1176px;top:815px;">Size:</div>
<div class="a t " style="left:1293px;top:815px;">Position:</div>
<div class="a num" style="left:1168px;top:835px;width:109px;height:40px;overflow:hidden"></div>
<svg class="a" style="left:1176px;top:840px" width="6" height="9"><polygon points="4.5,0.5 0.5,4.5 4.5,8.5" fill="#747474"/></svg>
<svg class="a" style="left:1264px;top:840px" width="6" height="9"><polygon points="0.5,0.5 4.5,4.5 0.5,8.5" fill="#747474"/></svg>
<div class="a t " style="left:1184px;top:836px;">Text:</div>
<div class="a t " style="right:419px;top:836px;;letter-spacing:0.7px">24</div>
<div class="a " style="left:1168px;top:854px;width:109px;height:1px;background:#262626"></div>
<svg class="a" style="left:1176px;top:860px" width="6" height="9"><polygon points="4.5,0.5 0.5,4.5 4.5,8.5" fill="#747474"/></svg>
<svg class="a" style="left:1264px;top:860px" width="6" height="9"><polygon points="0.5,0.5 4.5,4.5 0.5,8.5" fill="#747474"/></svg>
<div class="a t " style="left:1184px;top:856px;">Mouse:</div>
<div class="a t " style="right:419px;top:856px;;letter-spacing:0.7px">33</div>
<div class="a num" style="left:1285px;top:835px;width:110px;height:40px;overflow:hidden"></div>
<svg class="a" style="left:1293px;top:840px" width="6" height="9"><polygon points="4.5,0.5 0.5,4.5 4.5,8.5" fill="#747474"/></svg>
<svg class="a" style="left:1382px;top:840px" width="6" height="9"><polygon points="0.5,0.5 4.5,4.5 0.5,8.5" fill="#747474"/></svg>
<div class="a t " style="left:1301px;top:836px;">X:</div>
<div class="a t " style="right:301px;top:836px;;letter-spacing:0.7px">3</div>
<div class="a " style="left:1285px;top:854px;width:110px;height:1px;background:#262626"></div>
<svg class="a" style="left:1293px;top:860px" width="6" height="9"><polygon points="4.5,0.5 0.5,4.5 4.5,8.5" fill="#747474"/></svg>
<svg class="a" style="left:1382px;top:860px" width="6" height="9"><polygon points="0.5,0.5 4.5,4.5 0.5,8.5" fill="#747474"/></svg>
<div class="a t " style="left:1301px;top:856px;">Y:</div>
<div class="a t " style="right:301px;top:856px;;letter-spacing:0.7px">10</div>
<div class="a t " style="left:1176px;top:880px;">Text / Icon Color:</div>
<div class="a" style="left:1281px;top:880px;width:114px;height:19px;border:1px solid #262626;border-radius:4px;background:#fff"></div>
<div class="a num" style="left:1168px;top:905px;width:227px;height:20px;overflow:hidden"></div>
<svg class="a" style="left:1176px;top:910px" width="6" height="9"><polygon points="4.5,0.5 0.5,4.5 4.5,8.5" fill="#747474"/></svg>
<svg class="a" style="left:1382px;top:910px" width="6" height="9"><polygon points="0.5,0.5 4.5,4.5 0.5,8.5" fill="#747474"/></svg>
<div class="a t " style="left:1184px;top:906px;">Fade Out Time:</div>
<div class="a t " style="right:301px;top:906px;;letter-spacing:0.7px">3.50</div>
<div class="a t " style="left:1176px;top:941px;">Mouse:</div>
<div class="a menu" style="left:1242px;top:941px;width:153px;height:19px"></div>
<div class="a t w" style="left:1250px;top:941px;">Icon</div>
<svg class="a" style="left:1384px;top:943px" width="7" height="14"><polygon points="0.5,5.5 3.5,0.5 6.5,5.5" fill="#c8c8c8"/><polygon points="0.5,8 3.5,13 6.5,8" fill="#c8c8c8"/></svg>
<div class="a" style="left:1168px;top:966px;width:227px;height:19px;border:1px solid #262626;border-radius:4px;overflow:hidden;background:linear-gradient(#545454,#363636)"><div class="a" style="left:0;top:0;width:112px;height:17px;background:linear-gradient(#5f8bd0,#4677c0)"></div><div class="a" style="left:112px;top:0;width:1px;height:17px;background:#262626"></div></div>
<div class="a t " style="left:1168px;width:112px;text-align:center;top:966px;">Left</div>
<div class="a t w" style="left:1281px;width:113px;text-align:center;top:966px;">Right</div>
<div class="a t " style="left:1176px;top:991px;">Display:</div>
<div class="a" style="left:1160px;top:1018px;width:258px;height:5px;overflow:hidden"><div class="a opt" style="left:11px;top:0;width:14px;height:14px"></div></div>
<div class="a " style="left:1421px;top:27px;width:259px;height:26px;background:#6b6b6b"></div>
<div class="a " style="left:1421px;top:52px;width:259px;height:1px;background:#5f5f5f"></div>
<div class="a menu" style="left:1430px;top:30px;width:30px;height:20px"></div>
<svg class="a" style="left:1434px;top:33px" width="16" height="14"><rect x="1" y="0.5" width="7" height="3" fill="#f0a040" stroke="#402000" stroke-width="0.8"/><path d="M3 3 L3 12 M3 7 L8 7 M3 12 L8 12" stroke="#8aa0e0" stroke-width="0.8" fill="none"/><rect x="8" y="6" width="6" height="2.5" fill="#fff"/><rect x="8" y="11" width="6" height="2.5" fill="#fff"/></svg>
<svg class="a" style="left:1451px;top:34px" width="7" height="14"><polygon points="0.5,5.5 3.5,0.5 6.5,5.5" fill="#bbb"/><polygon points="0.5,8 3.5,13 6.5,8" fill="#bbb"/></svg>
<div class="a t " style="left:1473px;top:31px;">View</div>
<div class="a t " style="left:1517px;top:31px;">Search</div>
<div class="a menu" style="left:1564px;top:30px;width:130px;height:20px"></div>
<div class="a t w" style="left:1572px;top:31px;">All Scenes</div>
<div class="a " style="left:1421px;top:53px;width:244px;height:20px;background:#727272"></div>
<div class="a " style="left:1421px;top:73px;width:244px;height:20px;background:#6d6d6d"></div>
<div class="a " style="left:1421px;top:93px;width:244px;height:20px;background:#727272"></div>
<div class="a " style="left:1421px;top:113px;width:244px;height:20px;background:#6d6d6d"></div>
<div class="a " style="left:1421px;top:133px;width:244px;height:20px;background:#727272"></div>
<div class="a " style="left:1421px;top:153px;width:244px;height:20px;background:#6d6d6d"></div>
<div class="a " style="left:1421px;top:173px;width:244px;height:20px;background:#727272"></div>
<div class="a " style="left:1421px;top:193px;width:244px;height:20px;background:#6d6d6d"></div>
<div class="a " style="left:1421px;top:213px;width:244px;height:20px;background:#727272"></div>
<div class="a " style="left:1421px;top:233px;width:244px;height:20px;background:#6d6d6d"></div>
<div class="a " style="left:1421px;top:74px;width:182px;height:19px;background:#7e8590"></div>
<div class="a " style="left:1603px;top:53px;width:1px;height:188px;background:#5d5d5d"></div>
<div class="a " style="left:1623px;top:53px;width:1px;height:188px;background:#5d5d5d"></div>
<div class="a " style="left:1644px;top:53px;width:1px;height:188px;background:#5d5d5d"></div>
<div class="a " style="left:1448px;top:68px;width:1px;height:172px;background:#333"></div>
<svg class="a" style="left:1425px;top:58px" width="10" height="10"><circle cx="5" cy="5" r="4.2" fill="#ddd" stroke="#111" stroke-width="1.1"/><path d="M2.6 5 L7.4 5" stroke="#111" stroke-width="1.2"/></svg>
<div class="a " style="left:1435px;top:62px;width:10px;height:1px;background:#333"></div>
<div class="a" style="left:1443px;top:55px;width:18px;height:18px;border-radius:9px;background:#9a9a9a"></div>
<svg class="a" style="left:1444px;top:56px" width="16" height="16"><circle cx="3" cy="3" r="2" fill="#e8d070"/><rect x="8" y="2" width="6" height="10" rx="2" fill="#4c7fc0" stroke="#1a2a50"/><circle cx="6" cy="11" r="4" fill="#ddd" stroke="#111"/></svg>
<div class="a t " style="left:1462px;top:55px;">Scene</div>
<svg class="a" style="left:1450px;top:78px" width="10" height="10"><circle cx="5" cy="5" r="4.2" fill="#ddd" stroke="#111" stroke-width="1.1"/><path d="M2.6 5 L7.4 5" stroke="#111" stroke-width="1.2"/><path d="M5 2.6 L5 7.4" stroke="#111" stroke-width="1.2"/></svg>
<svg class="a" style="left:1463px;top:76px" width="16" height="16"><rect x="3" y="3" width="11" height="11" fill="#ddd" stroke="#222" transform="rotate(8 8 8)"/><rect x="1" y="1" width="11" height="11" fill="#eee" stroke="#222"/><rect x="4" y="3" width="4" height="6" fill="#4a80d0"/></svg>
<div class="a t " style="left:1482px;top:75px;">RenderLayers</div>
<div class="a " style="left:1561px;top:78px;width:2px;height:11px;background:#2a2a2a"></div>
<div class="a" style="left:1569px;top:75px;width:18px;height:18px;border-radius:9px;background:#8b8b8b"></div>
<svg class="a" style="left:1570px;top:76px" width="16" height="16"><rect x="3" y="3" width="11" height="11" fill="#ddd" stroke="#222" transform="rotate(8 8 8)"/><rect x="1" y="1" width="11" height="11" fill="#eee" stroke="#222"/><rect x="4" y="3" width="4" height="6" fill="#4a80d0"/></svg>
<div class="a" style="left:1462px;top:95px;width:18px;height:18px;border-radius:9px;background:#8e9cb0"></div>
<svg class="a" style="left:1463px;top:96px" width="16" height="16"><circle cx="8" cy="8" r="6.5" fill="#3d7bc8" stroke="#111"/><path d="M4 5 C6 4 7 6 9 6 C10 8 8 10 6 11 C5 9 3 8 4 5Z" fill="#5fae4a"/></svg>
<div class="a t " style="left:1482px;top:95px;">World</div>
<svg class="a" style="left:1445px;top:119px" width="10" height="10"><circle cx="5" cy="5" r="4.2" fill="#ddd" stroke="#111" stroke-width="1.1"/><path d="M2.6 5 L7.4 5" stroke="#111" stroke-width="1.2"/><path d="M5 2.6 L5 7.4" stroke="#111" stroke-width="1.2"/></svg>
<div class="a " style="left:1455px;top:124px;width:8px;height:1px;background:#333"></div>
<svg class="a" style="left:1463px;top:116px" width="17" height="16"><circle cx="4.5" cy="4" r="3.2" fill="#f0a040" stroke="#402000"/><circle cx="10" cy="4" r="3.2" fill="#f0a040" stroke="#402000"/><rect x="2" y="7" width="11" height="6" fill="#f0a040" stroke="#402000"/><path d="M13 8 L16 7 L16 13 L13 12Z" fill="#f0a040" stroke="#402000"/></svg>
<div class="a t " style="left:1482px;top:115px;">Camera</div>
<div class="a " style="left:1532px;top:119px;width:2px;height:11px;background:#2a2a2a"></div>
<div class="a" style="left:1541px;top:115px;width:19px;height:19px;border-radius:10px;background:#8a8a8a"></div>
<svg class="a" style="left:1543px;top:117px" width="16" height="16"><circle cx="5" cy="5" r="3" fill="#9a9a9a" stroke="#666"/><circle cx="11" cy="5" r="3" fill="#9a9a9a" stroke="#666"/><rect x="3" y="8" width="9" height="5" fill="#9a9a9a" stroke="#666"/></svg>
<svg class="a" style="left:1605px;top:118px" width="16" height="12"><path d="M1 6 C4 1 12 1 15 6 C12 11 4 11 1 6Z" fill="#eee" stroke="#222"/><circle cx="8" cy="6" r="2.5" fill="#222"/></svg>
<svg class="a" style="left:1627px;top:117px" width="12" height="14"><path d="M2 1 L2 12 L5 9 L8 13 L10 12 L7 8 L11 8 Z" fill="#eee" stroke="#222" stroke-width="0.9"/></svg>
<svg class="a" style="left:1647px;top:117px" width="14" height="13"><rect x="1" y="3" width="12" height="9" fill="#ddd" stroke="#222"/><circle cx="7" cy="7.5" r="3" fill="#333"/><circle cx="7" cy="7.5" r="1.5" fill="#c04020"/><rect x="3" y="1" width="4" height="2" fill="#222"/></svg>
<svg class="a" style="left:1445px;top:139px" width="10" height="10"><circle cx="5" cy="5" r="4.2" fill="#ddd" stroke="#111" stroke-width="1.1"/><path d="M2.6 5 L7.4 5" stroke="#111" stroke-width="1.2"/><path d="M5 2.6 L5 7.4" stroke="#111" stroke-width="1.2"/></svg>
<div class="a " style="left:1455px;top:144px;width:8px;height:1px;background:#333"></div>
<svg class="a" style="left:1463px;top:136px" width="16" height="16"><circle cx="8" cy="6" r="4.5" fill="#f6d8a0" stroke="#402000"/><rect x="6" y="10" width="4" height="4" fill="#aaa" stroke="#222"/></svg>
<div class="a t " style="left:1482px;top:135px;">Lamp</div>
<div class="a " style="left:1521px;top:139px;width:2px;height:11px;background:#2a2a2a"></div>
<svg class="a" style="left:1530px;top:136px" width="16" height="16"><circle cx="8" cy="8" r="3" fill="#b8a888"/><path d="M2 5 L2 2 L5 2 M11 2 L14 2 L14 5 M14 11 L14 14 L11 14 M5 14 L2 14 L2 11" stroke="#b8a070" fill="none"/></svg>
<svg class="a" style="left:1605px;top:138px" width="16" height="12"><path d="M1 6 C4 1 12 1 15 6 C12 11 4 11 1 6Z" fill="#eee" stroke="#222"/><circle cx="8" cy="6" r="2.5" fill="#222"/></svg>
<svg class="a" style="left:1627px;top:137px" width="12" height="14"><path d="M2 1 L2 12 L5 9 L8 13 L10 12 L7 8 L11 8 Z" fill="#eee" stroke="#222" stroke-width="0.9"/></svg>
<svg class="a" style="left:1647px;top:137px" width="14" height="13"><rect x="1" y="3" width="12" height="9" fill="#ddd" stroke="#222"/><circle cx="7" cy="7.5" r="3" fill="#333"/><circle cx="7" cy="7.5" r="1.5" fill="#c04020"/><rect x="3" y="1" width="4" height="2" fill="#222"/></svg>
<svg class="a" style="left:1445px;top:159px" width="10" height="10"><circle cx="5" cy="5" r="4.2" fill="#ddd" stroke="#111" stroke-width="1.1"/><path d="M2.6 5 L7.4 5" stroke="#111" stroke-width="1.2"/><path d="M5 2.6 L5 7.4" stroke="#111" stroke-width="1.2"/></svg>
<div class="a " style="left:1455px;top:164px;width:8px;height:1px;background:#333"></div>
<div class="a" style="left:1462px;top:155px;width:18px;height:18px;border-radius:9px;background:#b0845a"></div>
<svg class="a" style="left:1463px;top:156px" width="16" height="16"><path d="M2 3 L14 3 L8 14 Z" fill="none" stroke="#222" stroke-width="3"/><path d="M2 3 L14 3 L8 14 Z" fill="none" stroke="#f0a040" stroke-width="1.6"/></svg>
<div class="a t " style="left:1482px;top:155px;color:#fff">Plane</div>
<div class="a " style="left:1520px;top:159px;width:2px;height:11px;background:#2a2a2a"></div>
<svg class="a" style="left:1529px;top:156px" width="16" height="16"><path d="M3 3 L13 3 L8 13 Z" fill="none" stroke="#aaa" stroke-width="1"/><g fill="#eee" stroke="#222" stroke-width="0.7"><rect x="1.5" y="1.5" width="3" height="3"/><rect x="11.5" y="1.5" width="3" height="3"/><rect x="6.5" y="11.5" width="3" height="3"/></g></svg>
<svg class="a" style="left:1605px;top:158px" width="16" height="12"><path d="M1 6 C4 1 12 1 15 6 C12 11 4 11 1 6Z" fill="#eee" stroke="#222"/><circle cx="8" cy="6" r="2.5" fill="#222"/></svg>
<svg class="a" style="left:1627px;top:157px" width="12" height="14"><path d="M2 1 L2 12 L5 9 L8 13 L10 12 L7 8 L11 8 Z" fill="#eee" stroke="#222" stroke-width="0.9"/></svg>
<svg class="a" style="left:1647px;top:157px" width="14" height="13"><rect x="1" y="3" width="12" height="9" fill="#ddd" stroke="#222"/><circle cx="7" cy="7.5" r="3" fill="#333"/><circle cx="7" cy="7.5" r="1.5" fill="#c04020"/><rect x="3" y="1" width="4" height="2" fill="#222"/></svg>
<svg class="a" style="left:1445px;top:179px" width="10" height="10"><circle cx="5" cy="5" r="4.2" fill="#ddd" stroke="#111" stroke-width="1.1"/><path d="M2.6 5 L7.4 5" stroke="#111" stroke-width="1.2"/><path d="M5 2.6 L5 7.4" stroke="#111" stroke-width="1.2"/></svg>
<div class="a " style="left:1455px;top:184px;width:8px;height:1px;background:#333"></div>
<svg class="a" style="left:1463px;top:176px" width="16" height="16"><path d="M2 3 L14 3 L8 14 Z" fill="none" stroke="#222" stroke-width="3"/><path d="M2 3 L14 3 L8 14 Z" fill="none" stroke="#f0a040" stroke-width="1.6"/></svg>
<div class="a t " style="left:1482px;top:175px;">Plane.001</div>
<div class="a " style="left:1544px;top:179px;width:2px;height:11px;background:#2a2a2a"></div>
<svg class="a" style="left:1553px;top:176px" width="16" height="16"><path d="M3 3 L13 3 L8 13 Z" fill="none" stroke="#aaa" stroke-width="1"/><g fill="#eee" stroke="#222" stroke-width="0.7"><rect x="1.5" y="1.5" width="3" height="3"/><rect x="11.5" y="1.5" width="3" height="3"/><rect x="6.5" y="11.5" width="3" height="3"/></g></svg>
<svg class="a" style="left:1605px;top:178px" width="16" height="12"><path d="M1 6 C4 1 12 1 15 6 C12 11 4 11 1 6Z" fill="#eee" stroke="#222"/><circle cx="8" cy="6" r="2.5" fill="#222"/></svg>
<svg class="a" style="left:1627px;top:177px" width="12" height="14"><path d="M2 1 L2 12 L5 9 L8 13 L10 12 L7 8 L11 8 Z" fill="#eee" stroke="#222" stroke-width="0.9"/></svg>
<svg class="a" style="left:1647px;top:177px" width="14" height="13"><rect x="1" y="3" width="12" height="9" fill="#ddd" stroke="#222"/><circle cx="7" cy="7.5" r="3" fill="#333"/><circle cx="7" cy="7.5" r="1.5" fill="#c04020"/><rect x="3" y="1" width="4" height="2" fill="#222"/></svg>
<svg class="a" style="left:1445px;top:199px" width="10" height="10"><circle cx="5" cy="5" r="4.2" fill="#ddd" stroke="#111" stroke-width="1.1"/><path d="M2.6 5 L7.4 5" stroke="#111" stroke-width="1.2"/><path d="M5 2.6 L5 7.4" stroke="#111" stroke-width="1.2"/></svg>
<div class="a " style="left:1455px;top:204px;width:8px;height:1px;background:#333"></div>
<svg class="a" style="left:1463px;top:196px" width="16" height="16"><path d="M2 3 L14 3 L8 14 Z" fill="none" stroke="#222" stroke-width="3"/><path d="M2 3 L14 3 L8 14 Z" fill="none" stroke="#f0a040" stroke-width="1.6"/></svg>
<div class="a t " style="left:1482px;top:195px;">Sphere</div>
<div class="a " style="left:1527px;top:199px;width:2px;height:11px;background:#2a2a2a"></div>
<svg class="a" style="left:1536px;top:196px" width="16" height="16"><path d="M3 3 L13 3 L8 13 Z" fill="none" stroke="#aaa" stroke-width="1"/><g fill="#eee" stroke="#222" stroke-width="0.7"><rect x="1.5" y="1.5" width="3" height="3"/><rect x="11.5" y="1.5" width="3" height="3"/><rect x="6.5" y="11.5" width="3" height="3"/></g></svg>
<svg class="a" style="left:1557px;top:195px" width="16" height="16"><path d="M2.5 13.5 L8.6 7.4" stroke="#1a2a50" stroke-width="3.8" stroke-linecap="round"/><path d="M14.8 4.8 A3.6 3.6 0 1 1 11.2 1.2" fill="none" stroke="#1a2a50" stroke-width="3.6"/><path d="M2.5 13.5 L8.6 7.4" stroke="#6a9ee8" stroke-width="2.2" stroke-linecap="round"/><path d="M14.8 4.8 A3.6 3.6 0 1 1 11.2 1.2" fill="none" stroke="#6a9ee8" stroke-width="2"/></svg>
<svg class="a" style="left:1605px;top:198px" width="16" height="12"><path d="M1 6 C4 1 12 1 15 6 C12 11 4 11 1 6Z" fill="#eee" stroke="#222"/><circle cx="8" cy="6" r="2.5" fill="#222"/></svg>
<svg class="a" style="left:1627px;top:197px" width="12" height="14"><path d="M2 1 L2 12 L5 9 L8 13 L10 12 L7 8 L11 8 Z" fill="#eee" stroke="#222" stroke-width="0.9"/></svg>
<svg class="a" style="left:1647px;top:197px" width="14" height="13"><rect x="1" y="3" width="12" height="9" fill="#ddd" stroke="#222"/><circle cx="7" cy="7.5" r="3" fill="#333"/><circle cx="7" cy="7.5" r="1.5" fill="#c04020"/><rect x="3" y="1" width="4" height="2" fill="#222"/></svg>
<svg class="a" style="left:1445px;top:219px" width="10" height="10"><circle cx="5" cy="5" r="4.2" fill="#ddd" stroke="#111" stroke-width="1.1"/><path d="M2.6 5 L7.4 5" stroke="#111" stroke-width="1.2"/><path d="M5 2.6 L5 7.4" stroke="#111" stroke-width="1.2"/></svg>
<div class="a " style="left:1455px;top:224px;width:8px;height:1px;background:#333"></div>
<svg class="a" style="left:1463px;top:216px" width="16" height="16"><path d="M2 3 L14 3 L8 14 Z" fill="none" stroke="#222" stroke-width="3"/><path d="M2 3 L14 3 L8 14 Z" fill="none" stroke="#f0a040" stroke-width="1.6"/></svg>
<div class="a t " style="left:1482px;top:215px;">Sphere.001</div>
<div class="a " style="left:1551px;top:219px;width:2px;height:11px;background:#2a2a2a"></div>
<svg class="a" style="left:1560px;top:216px" width="16" height="16"><path d="M3 3 L13 3 L8 13 Z" fill="none" stroke="#aaa" stroke-width="1"/><g fill="#eee" stroke="#222" stroke-width="0.7"><rect x="1.5" y="1.5" width="3" height="3"/><rect x="11.5" y="1.5" width="3" height="3"/><rect x="6.5" y="11.5" width="3" height="3"/></g></svg>
<svg class="a" style="left:1581px;top:215px" width="16" height="16"><path d="M2.5 13.5 L8.6 7.4" stroke="#1a2a50" stroke-width="3.8" stroke-linecap="round"/><path d="M14.8 4.8 A3.6 3.6 0 1 1 11.2 1.2" fill="none" stroke="#1a2a50" stroke-width="3.6"/><path d="M2.5 13.5 L8.6 7.4" stroke="#6a9ee8" stroke-width="2.2" stroke-linecap="round"/><path d="M14.8 4.8 A3.6 3.6 0 1 1 11.2 1.2" fill="none" stroke="#6a9ee8" stroke-width="2"/></svg>
<svg class="a" style="left:1605px;top:218px" width="16" height="12"><path d="M1 6 C4 1 12 1 15 6 C12 11 4 11 1 6Z" fill="#eee" stroke="#222"/><circle cx="8" cy="6" r="2.5" fill="#222"/></svg>
<svg class="a" style="left:1627px;top:217px" width="12" height="14"><path d="M2 1 L2 12 L5 9 L8 13 L10 12 L7 8 L11 8 Z" fill="#eee" stroke="#222" stroke-width="0.9"/></svg>
<svg class="a" style="left:1647px;top:217px" width="14" height="13"><rect x="1" y="3" width="12" height="9" fill="#ddd" stroke="#222"/><circle cx="7" cy="7.5" r="3" fill="#333"/><circle cx="7" cy="7.5" r="1.5" fill="#c04020"/><rect x="3" y="1" width="4" height="2" fill="#222"/></svg>
<svg class="a" style="left:1463px;top:236px" width="16" height="16"><path d="M2 3 L14 3 L8 14 Z" fill="none" stroke="#222" stroke-width="3"/><path d="M2 3 L14 3 L8 14 Z" fill="none" stroke="#f0a040" stroke-width="1.6"/></svg>
<div class="a" style="left:1664px;top:58px;width:12px;height:176px;border-radius:6px;background:#5c5c5c;border:1px solid #6a6a6a"></div>
<div class="a" style="left:1664px;top:58px;width:12px;height:82px;border-radius:6px;background:linear-gradient(90deg,#8e8e8e,#7c7c7c);border:1px solid #6a6a6a"></div>
<div class="a " style="left:1421px;top:240px;width:259px;height:16px;background:#727272"></div>
<div class="a" style="left:1426px;top:241px;width:231px;height:12px;border-radius:6px;background:#5c5c5c;border:1px solid #6a6a6a"></div>
<div class="a" style="left:1426px;top:241px;width:186px;height:12px;border-radius:6px;background:linear-gradient(#8e8e8e,#7c7c7c);border:1px solid #6a6a6a"></div>
<div class="a " style="left:1421px;top:257px;width:259px;height:27px;background:#6b6b6b"></div>
<div class="a " style="left:1421px;top:283px;width:259px;height:1px;background:#5c5c5c"></div>
<div class="a " style="left:1421px;top:284px;width:259px;height:1px;background:#878787"></div>
<div class="a menu" style="left:1431px;top:261px;width:29px;height:20px"></div>
<svg class="a" style="left:1435px;top:264px" width="14" height="14"><rect x="1" y="1" width="12" height="5" rx="2.5" fill="#fff" stroke="#222"/><rect x="1" y="8" width="12" height="5" rx="2.5" fill="#fff" stroke="#222"/><circle cx="10" cy="3.5" r="1.6" fill="#222"/><circle cx="4" cy="10.5" r="1.6" fill="#222"/></svg>
<svg class="a" style="left:1451px;top:264px" width="7" height="14"><polygon points="0.5,5.5 3.5,0.5 6.5,5.5" fill="#bbb"/><polygon points="0.5,8 3.5,13 6.5,8" fill="#bbb"/></svg>
<div class="a menu" style="left:1468px;top:261px;width:230px;height:21px;border-radius:4px;overflow:hidden"></div>
<div class="a " style="left:1487px;top:262px;width:1px;height:19px;background:#1e1e1e"></div>
<div class="a " style="left:1507px;top:262px;width:1px;height:19px;background:#1e1e1e"></div>
<div class="a " style="left:1527px;top:262px;width:1px;height:19px;background:#1e1e1e"></div>
<div class="a " style="left:1547px;top:262px;width:1px;height:19px;background:#1e1e1e"></div>
<div class="a " style="left:1567px;top:262px;width:1px;height:19px;background:#1e1e1e"></div>
<div class="a " style="left:1587px;top:262px;width:1px;height:19px;background:#1e1e1e"></div>
<div class="a " style="left:1607px;top:262px;width:1px;height:19px;background:#1e1e1e"></div>
<div class="a " style="left:1627px;top:262px;width:1px;height:19px;background:#1e1e1e"></div>
<div class="a " style="left:1647px;top:262px;width:1px;height:19px;background:#1e1e1e"></div>
<div class="a " style="left:1667px;top:262px;width:1px;height:19px;background:#1e1e1e"></div>
<div class="a " style="left:1628px;top:262px;width:19px;height:19px;background:linear-gradient(#5e92d6,#4a82cf)"></div>
<svg class="a" style="left:1470px;top:263px" width="16" height="16"><rect x="1.5" y="4.5" width="13" height="9" rx="1" fill="#c8c8c8" stroke="#222"/><rect x="3" y="2.5" width="4" height="2" fill="#ddd" stroke="#222" stroke-width="0.8"/><circle cx="9" cy="9" r="3" fill="#444" stroke="#111"/><circle cx="9" cy="9" r="1.4" fill="#c05030"/><rect x="2.5" y="6" width="2" height="1.5" fill="#e04020"/></svg>
<svg class="a" style="left:1490px;top:263px" width="16" height="16"><rect x="4" y="4" width="9" height="9" fill="#ccc" stroke="#222"/><rect x="2" y="2" width="9" height="9" fill="#ddd" stroke="#222"/><rect x="4" y="4" width="3" height="5" fill="#4a80d0"/></svg>
<svg class="a" style="left:1510px;top:263px" width="16" height="16"><circle cx="4" cy="3" r="2" fill="#e8d070"/><rect x="8" y="2" width="5" height="9" rx="2" fill="#4c7fc0"/><circle cx="6" cy="11" r="3.5" fill="#ddd" stroke="#111"/></svg>
<svg class="a" style="left:1530px;top:263px" width="16" height="16"><circle cx="8" cy="8" r="6.2" fill="#4a7fc0" stroke="#223"/><path d="M3.5 5 C5 3 8 3 9 5 C8 7 6 7 6.5 9 C5 11 4 10 3 8Z" fill="#6a9a60"/><path d="M10 9 C12 8 13 10 12 12 C10 13 9 11 10 9Z" fill="#6a9a60"/><circle cx="6" cy="5" r="2" fill="#fff" opacity="0.35"/></svg>
<svg class="a" style="left:1550px;top:263px" width="16" height="16"><path d="M8 2 L14 5 L14 11 L8 14 L2 11 L2 5 Z" fill="#c08850" stroke="#222"/><path d="M2 5 L8 8 L14 5 M8 8 L8 14" stroke="#e8c090" fill="none"/></svg>
<svg class="a" style="left:1570px;top:263px" width="16" height="16"><rect x="1" y="6" width="8" height="5" rx="2.5" fill="none" stroke="#ccc" stroke-width="1.5" transform="rotate(-30 5 8)"/><rect x="7" y="5" width="8" height="5" rx="2.5" fill="none" stroke="#ccc" stroke-width="1.5" transform="rotate(-30 11 7)"/></svg>
<svg class="a" style="left:1590px;top:263px" width="16" height="16"><path d="M2.5 13.5 L8.6 7.4" stroke="#1a2a50" stroke-width="3.8" stroke-linecap="round"/><path d="M14.8 4.8 A3.6 3.6 0 1 1 11.2 1.2" fill="none" stroke="#1a2a50" stroke-width="3.6"/><path d="M2.5 13.5 L8.6 7.4" stroke="#6a9ee8" stroke-width="2.2" stroke-linecap="round"/><path d="M14.8 4.8 A3.6 3.6 0 1 1 11.2 1.2" fill="none" stroke="#6a9ee8" stroke-width="2"/></svg>
<svg class="a" style="left:1610px;top:263px" width="16" height="16"><path d="M3 3 L13 3 L8 13 Z" fill="none" stroke="#aaa"/><g fill="#eee" stroke="#222" stroke-width="0.7"><rect x="1.5" y="1.5" width="3" height="3"/><rect x="11.5" y="1.5" width="3" height="3"/><rect x="6.5" y="11.5" width="3" height="3"/></g></svg>
<svg class="a" style="left:1630px;top:263px" width="16" height="16"><circle cx="8" cy="8" r="6.5" fill="#e8e8e8" stroke="#111"/><path d="M8 8 L8 1.5 A6.5 6.5 0 0 1 14.5 8 Z" fill="#8a8a8a"/><path d="M8 8 L1.5 8 A6.5 6.5 0 0 0 8 14.5 Z" fill="#9a8070"/><path d="M8 8 L14.5 8 A6.5 6.5 0 0 1 8 14.5 Z" fill="#d09070"/><circle cx="6" cy="6" r="2.6" fill="#fff" opacity="0.7"/></svg>
<svg class="a" style="left:1650px;top:263px" width="16" height="16"><rect x="2" y="2" width="12" height="12" fill="#ccc" stroke="#333"/><g fill="#8a3010"><rect x="2" y="2" width="3" height="3"/><rect x="8" y="2" width="3" height="3"/><rect x="5" y="5" width="3" height="3"/><rect x="11" y="5" width="3" height="3"/><rect x="2" y="8" width="3" height="3"/><rect x="8" y="8" width="3" height="3"/><rect x="5" y="11" width="3" height="3"/><rect x="11" y="11" width="3" height="3"/></g></svg>
<svg class="a" style="left:1670px;top:263px" width="16" height="16"><path d="M6 2 L7 6 L11 7 L7 8 L6 12 L5 8 L1 7 L5 6 Z" fill="#eee"/><path d="M12 8 L13 11 L16 12 L13 13 L12 16 L11 13 L8 12 L11 11 Z" fill="#eee"/></svg>
<svg class="a" style="left:1431px;top:292px" width="17" height="17"><path d="M1.5 15.5 L7 10" stroke="#111" stroke-width="2.4"/><path d="M1.5 15.5 L7 10" stroke="#ddd" stroke-width="1"/><path d="M4 8 L9 13 L10 10 L13 7 L15 7 L10 2 L10 4 L7 7 Z" fill="#ddd" stroke="#222" stroke-width="1"/></svg>
<svg class="a" style="left:1453px;top:293px" width="16" height="16"><circle cx="3" cy="3" r="2" fill="#e8d070"/><rect x="8" y="2" width="6" height="10" rx="2" fill="#4c7fc0" stroke="#1a2a50"/><circle cx="6" cy="11" r="4" fill="#ddd" stroke="#111"/></svg>
<svg class="a" style="left:1473px;top:299px" width="7" height="7"><polygon points="0,0 6,3.0 0,6" fill="#2a2a2a"/></svg>
<svg class="a" style="left:1494px;top:294px" width="15" height="15"><path d="M7.5 1 L14 4 L14 11 L7.5 14 L1 11 L1 4 Z" fill="#f0a040" stroke="#3a2000"/><path d="M1 4 L7.5 7 L14 4 M7.5 7 L7.5 14" stroke="#fde0b0" fill="none"/></svg>
<div class="a t " style="left:1513px;top:293px;">Plane</div>
<svg class="a" style="left:1555px;top:299px" width="7" height="7"><polygon points="0,0 6,3.0 0,6" fill="#2a2a2a"/></svg>
<svg class="a" style="left:1575px;top:294px" width="16" height="16"><circle cx="8" cy="8" r="7" fill="#e8e8e8" stroke="#111"/><path d="M8 8 L8 1 A7 7 0 0 1 15 8 Z" fill="#8a8a8a"/><path d="M8 8 L1 8 A7 7 0 0 0 8 15 Z" fill="#9a8070"/><path d="M8 8 L15 8 A7 7 0 0 1 8 15 Z" fill="#d09070"/><circle cx="6" cy="6" r="2.8" fill="#fff" opacity="0.7"/></svg>
<div class="a t " style="left:1595px;top:293px;">Material.010</div>
<div class="a" style="left:1430px;top:328px;width:214px;height:43px;border:1px solid #3e3e3e;border-radius:5px;background:#7a7a7a"></div>
<div class="a " style="left:1435px;top:337px;width:203px;height:18px;background:#4a7fc4"></div>
<div class="a" style="left:1438px;top:338px;width:16px;height:16px;border-radius:8px;background:#fff;border:1px solid #444"></div>
<div class="a t " style="left:1458px;top:337px;">Material.010</div>
<svg class="a" style="left:1439px;top:357px" width="9" height="9"><circle cx="4.5" cy="4.5" r="3.5" fill="none" stroke="#555"/><path d="M4.5 2.5 L4.5 6.5 M2.5 4.5 L6.5 4.5" stroke="#555"/></svg>
<div class="a " style="left:1539px;top:358px;width:14px;height:1px;background:#333"></div>
<div class="a " style="left:1539px;top:361px;width:14px;height:1px;background:#333"></div>
<div class="a tool" style="left:1652px;top:329px;width:20px;height:40px;border-radius:4px 4px 0 0"></div>
<div class="a " style="left:1652px;top:348px;width:20px;height:1px;background:#262626"></div>
<div class="a menu" style="left:1652px;top:368px;width:20px;height:20px;border-radius:0 0 4px 4px"></div>
<svg class="a" style="left:1656px;top:332px" width="13" height="13"><path d="M5 1h3v4h4v3h-4v4h-3v-4h-4v-3h4z" fill="#fff" stroke="#222" stroke-width="0.9"/></svg>
<svg class="a" style="left:1656px;top:352px" width="13" height="13"><rect x="1" y="5" width="11" height="3" fill="#fff" stroke="#222" stroke-width="0.9"/></svg>
<svg class="a" style="left:1656px;top:372px" width="12" height="12"><polygon points="1,2 11,2 6,11" fill="#111"/><path d="M8 4 L6 10" stroke="#ddd"/></svg>
<div class="a" style="left:1430px;top:394px;width:151px;height:19px;border:1px solid #262626;border-radius:4px;overflow:hidden;background:linear-gradient(#545454,#363636)"><div class="a" style="left:30px;top:0;width:60px;height:17px;background:linear-gradient(#9c9c9c,#b0b0b0)"></div><div class="a" style="left:90px;top:0;width:60px;height:17px;background:linear-gradient(#a9a9a9,#8b8b8b)"></div><div class="a" style="left:90px;top:0;width:1px;height:17px;background:#262626"></div><div class="a" style="left:110px;top:0;width:1px;height:17px;background:#262626"></div><div class="a" style="left:130px;top:0;width:1px;height:17px;background:#262626"></div></div>
<svg class="a" style="left:1433px;top:396px" width="16" height="16"><circle cx="8" cy="8" r="7" fill="#e8e8e8" stroke="#111"/><path d="M8 8 L8 1 A7 7 0 0 1 15 8 Z" fill="#8a8a8a"/><path d="M8 8 L1 8 A7 7 0 0 0 8 15 Z" fill="#9a8070"/><path d="M8 8 L15 8 A7 7 0 0 1 8 15 Z" fill="#d09070"/><circle cx="6" cy="6" r="2.8" fill="#fff" opacity="0.7"/></svg>
<svg class="a" style="left:1451px;top:397px" width="7" height="14"><polygon points="0.5,5.5 3.5,0.5 6.5,5.5" fill="#aaa"/><polygon points="0.5,8 3.5,13 6.5,8" fill="#aaa"/></svg>
<div class="a t " style="left:1467px;top:394px;">Material.</div>
<div class="a t " style="left:1520px;width:20px;text-align:center;top:394px;">F</div>
<svg class="a" style="left:1544px;top:397px" width="13" height="13"><path d="M5 1h3v4h4v3h-4v4h-3v-4h-4v-3h4z" fill="#fff" stroke="#222" stroke-width="0.9"/></svg>
<svg class="a" style="left:1564px;top:397px" width="13" height="13"><path d="M2 2L11 11M11 2L2 11" stroke="#222" stroke-width="3.4"/><path d="M2 2L11 11M11 2L2 11" stroke="#fff" stroke-width="1.8"/></svg>
<div class="a menu" style="left:1589px;top:394px;width:83px;height:19px"></div>
<div class="a t w" style="left:1597px;top:394px;">Data</div>
<svg class="a" style="left:1662px;top:396px" width="7" height="14"><polygon points="0.5,5.5 3.5,0.5 6.5,5.5" fill="#c8c8c8"/><polygon points="0.5,8 3.5,13 6.5,8" fill="#c8c8c8"/></svg>
<div class="a" style="left:1426px;top:420px;width:249px;height:1px;background:#5a5a5a"></div><div class="a" style="left:1426px;top:421px;width:249px;height:1px;background:#828282"></div>
<svg class="a" style="left:1433px;top:427.5px" width="9.6" height="9.6"><polygon points="0,0 8.6,4.3 0,8.6" fill="#222"/></svg>
<div class="a t " style="left:1446px;top:423px;font-size:12px">Custom Properties</div>
<svg class="a" style="left:1652px;top:421px" width="18" height="18"><g stroke="#555" stroke-width="1"><line x1="2" y1="1" x2="17" y2="16"/><line x1="8" y1="1" x2="17" y2="10"/><line x1="13" y1="1" x2="17" y2="5"/></g><g stroke="#8a8a8a" stroke-width="1"><line x1="1" y1="2" x2="16" y2="17"/><line x1="7" y1="2" x2="16" y2="11"/><line x1="12" y1="2" x2="16" y2="6"/></g></svg>
<div class="a" style="left:1426px;top:444px;width:249px;height:1px;background:#5a5a5a"></div><div class="a" style="left:1426px;top:445px;width:249px;height:1px;background:#828282"></div>
<svg class="a" style="left:1433px;top:451.5px" width="9.6" height="9.6"><polygon points="0,0 8.6,4.3 0,8.6" fill="#222"/></svg>
<div class="a t " style="left:1446px;top:447px;font-size:12px">Preview</div>
<svg class="a" style="left:1652px;top:445px" width="18" height="18"><g stroke="#555" stroke-width="1"><line x1="2" y1="1" x2="17" y2="16"/><line x1="8" y1="1" x2="17" y2="10"/><line x1="13" y1="1" x2="17" y2="5"/></g><g stroke="#8a8a8a" stroke-width="1"><line x1="1" y1="2" x2="16" y2="17"/><line x1="7" y1="2" x2="16" y2="11"/><line x1="12" y1="2" x2="16" y2="6"/></g></svg>
<div class="a" style="left:1426px;top:468px;width:249px;height:1px;background:#5a5a5a"></div><div class="a" style="left:1426px;top:469px;width:249px;height:1px;background:#828282"></div>
<svg class="a" style="left:1433px;top:476px" width="9.6" height="9.6"><polygon points="0,0 8.6,0 4.3,8.6" fill="#222"/></svg>
<div class="a t " style="left:1446px;top:471px;font-size:12px">Surface</div>
<svg class="a" style="left:1652px;top:469px" width="18" height="18"><g stroke="#555" stroke-width="1"><line x1="2" y1="1" x2="17" y2="16"/><line x1="8" y1="1" x2="17" y2="10"/><line x1="13" y1="1" x2="17" y2="5"/></g><g stroke="#8a8a8a" stroke-width="1"><line x1="1" y1="2" x2="16" y2="17"/><line x1="7" y1="2" x2="16" y2="11"/><line x1="12" y1="2" x2="16" y2="6"/></g></svg>
<div class="a t " style="left:1436px;top:502px;">Surface:</div>
<div class="a menu" style="left:1519px;top:501px;width:153px;height:20px"></div>
<div class="a t w" style="left:1527px;top:502px;">Emission</div>
<div class="a" style="left:1657px;top:508px;width:6px;height:6px;border-radius:3px;border:1px solid #ddd"></div>
<div class="a t " style="left:1446px;top:538px;">Color:</div>
<div class="a" style="left:1519px;top:537px;width:153px;height:20px;border:1px solid #262626;border-radius:4px;overflow:hidden;background:linear-gradient(#545454,#363636)"><div class="a" style="left:0;top:0;width:132px;height:18px;background:#e8e8e8"></div></div>
<div class="a" style="left:1657px;top:544px;width:6px;height:6px;border-radius:3px;border:1px solid #ddd"></div>
<div class="a t " style="left:1446px;top:563px;">Strength:</div>
<div class="a" style="left:1519px;top:562px;width:153px;height:20px;border:1px solid #262626;border-radius:9px 4px 4px 9px;overflow:hidden;background:linear-gradient(#545454,#363636)"><div class="a num" style="left:0;top:0;width:133px;height:18px;border:none;border-right:1px solid #262626;border-radius:0"></div></div>
<svg class="a" style="left:1525px;top:568px" width="5" height="8"><polygon points="4,0 0,4 4,8" fill="#777"/></svg><svg class="a" style="left:1641px;top:568px" width="5" height="8"><polygon points="0,0 4,4 0,8" fill="#777"/></svg>
<div class="a t " style="right:44px;top:563px;">10.000</div>
<div class="a" style="left:1657px;top:569px;width:6px;height:6px;border-radius:3px;border:1px solid #ddd"></div>
<div class="a" style="left:1426px;top:589px;width:249px;height:1px;background:#5a5a5a"></div><div class="a" style="left:1426px;top:590px;width:249px;height:1px;background:#828282"></div>
<svg class="a" style="left:1433px;top:596.5px" width="9.6" height="9.6"><polygon points="0,0 8.6,4.3 0,8.6" fill="#222"/></svg>
<div class="a t " style="left:1446px;top:592px;font-size:12px">Volume</div>
<svg class="a" style="left:1652px;top:590px" width="18" height="18"><g stroke="#555" stroke-width="1"><line x1="2" y1="1" x2="17" y2="16"/><line x1="8" y1="1" x2="17" y2="10"/><line x1="13" y1="1" x2="17" y2="5"/></g><g stroke="#8a8a8a" stroke-width="1"><line x1="1" y1="2" x2="16" y2="17"/><line x1="7" y1="2" x2="16" y2="11"/><line x1="12" y1="2" x2="16" y2="6"/></g></svg>
<div class="a" style="left:1426px;top:613px;width:249px;height:1px;background:#5a5a5a"></div><div class="a" style="left:1426px;top:614px;width:249px;height:1px;background:#828282"></div>
<svg class="a" style="left:1433px;top:620.5px" width="9.6" height="9.6"><polygon points="0,0 8.6,4.3 0,8.6" fill="#222"/></svg>
<div class="a t " style="left:1446px;top:616px;font-size:12px">Displacement</div>
<svg class="a" style="left:1652px;top:614px" width="18" height="18"><g stroke="#555" stroke-width="1"><line x1="2" y1="1" x2="17" y2="16"/><line x1="8" y1="1" x2="17" y2="10"/><line x1="13" y1="1" x2="17" y2="5"/></g><g stroke="#8a8a8a" stroke-width="1"><line x1="1" y1="2" x2="16" y2="17"/><line x1="7" y1="2" x2="16" y2="11"/><line x1="12" y1="2" x2="16" y2="6"/></g></svg>
<div class="a" style="left:1426px;top:637px;width:249px;height:1px;background:#5a5a5a"></div><div class="a" style="left:1426px;top:638px;width:249px;height:1px;background:#828282"></div>
<svg class="a" style="left:1433px;top:646px" width="9.6" height="9.6"><polygon points="0,0 8.6,0 4.3,8.6" fill="#222"/></svg>
<div class="a t " style="left:1446px;top:641px;font-size:12px">Settings</div>
<svg class="a" style="left:1652px;top:639px" width="18" height="18"><g stroke="#555" stroke-width="1"><line x1="2" y1="1" x2="17" y2="16"/><line x1="8" y1="1" x2="17" y2="10"/><line x1="13" y1="1" x2="17" y2="5"/></g><g stroke="#8a8a8a" stroke-width="1"><line x1="1" y1="2" x2="16" y2="17"/><line x1="7" y1="2" x2="16" y2="11"/><line x1="12" y1="2" x2="16" y2="6"/></g></svg>
<div class="a t " style="left:1436px;top:671px;">Viewport Color:</div>
<div class="a" style="left:1430px;top:690px;width:116px;height:40px;border:1px solid #262626;border-radius:4px 4px 9px 9px;overflow:hidden;background:linear-gradient(#9f9f9f,#b5b5b5)"><div class="a" style="left:0;top:0;width:116px;height:19px;background:#ececec;border-bottom:1px solid #262626"></div></div>
<div class="a t " style="left:1443px;top:711px;">Alpha:</div>
<div class="a t " style="right:150px;top:711px;">1.000</div>
<div class="a num" style="left:1554px;top:690px;width:118px;height:20px;overflow:hidden"></div>
<svg class="a" style="left:1562px;top:695px" width="6" height="9"><polygon points="4.5,0.5 0.5,4.5 4.5,8.5" fill="#747474"/></svg>
<svg class="a" style="left:1659px;top:695px" width="6" height="9"><polygon points="0.5,0.5 4.5,4.5 0.5,8.5" fill="#747474"/></svg>
<div class="a t " style="left:1570px;top:691px;">Pass Index:</div>
<div class="a t " style="right:24px;top:691px;;letter-spacing:0.7px">0</div>
<div class="a opt" style="left:1432px;top:738px;width:14px;height:14px"></div>
<svg class="a" style="left:1432px;top:736px" width="16" height="16"><polyline points="3,7.5 6.5,11 13.5,2" fill="none" stroke="#dcdcdc" stroke-width="1.7"/></svg>
<div class="a t w" style="left:1454px;top:736px;">Multiple Importance Sample</div>
<div class="a opt" style="left:1432px;top:760px;width:14px;height:14px"></div>
<svg class="a" style="left:1432px;top:758px" width="16" height="16"><polyline points="3,7.5 6.5,11 13.5,2" fill="none" stroke="#dcdcdc" stroke-width="1.7"/></svg>
<div class="a t w" style="left:1454px;top:758px;">Transparent Shadows</div>
<div class="a " style="left:0px;top:1023px;width:1420px;height:1px;background:#5f5f5f"></div>
<div class="a " style="left:0px;top:1024px;width:1420px;height:1px;background:#878787"></div>
<div class="a " style="left:0px;top:1049px;width:1680px;height:1px;background:#666"></div>
<div class="a menu" style="left:10px;top:1027px;width:29px;height:20px"></div>
<svg class="a" style="left:14px;top:1030px" width="14" height="15"><path d="M7 1 L13 4 L13 11 L7 14 L1 11 L1 4 Z" fill="#ddd" stroke="#222"/><path d="M1 4 L7 7 L13 4 M7 7 L7 14" stroke="#666" fill="none"/></svg>
<svg class="a" style="left:29px;top:1030px" width="7" height="14"><polygon points="0.5,5.5 3.5,0.5 6.5,5.5" fill="#bbb"/><polygon points="0.5,8 3.5,13 6.5,8" fill="#bbb"/></svg>
<div class="a t " style="left:52px;top:1028px;">View</div>
<div class="a t " style="left:96px;top:1028px;">Select</div>
<div class="a t " style="left:147px;top:1028px;">Add</div>
<div class="a t " style="left:186px;top:1028px;">Object</div>
<div class="a menu" style="left:232px;top:1027px;width:113px;height:20px"></div>
<svg class="a" style="left:238px;top:1030px" width="14" height="14"><path d="M7 1 L13 4 L13 11 L7 14 L1 11 L1 4 Z" fill="#f0a040" stroke="#3a2000"/><path d="M1 4 L7 7 L13 4 M7 7 L7 14" stroke="#fde0b0" fill="none"/></svg>
<div class="a t w" style="left:256px;top:1028px;">Object Mode</div>
<svg class="a" style="left:334px;top:1030px" width="7" height="14"><polygon points="0.5,5.5 3.5,0.5 6.5,5.5" fill="#c8c8c8"/><polygon points="0.5,8 3.5,13 6.5,8" fill="#c8c8c8"/></svg>
<div class="a menu" style="left:350px;top:1027px;width:35px;height:20px"></div>
<svg class="a" style="left:354px;top:1030px" width="15" height="15"><defs><radialGradient id="shs" cx="0.4" cy="0.35" r="0.7"><stop offset="0" stop-color="#fff"/><stop offset="0.7" stop-color="#e0e0e0"/><stop offset="1" stop-color="#999"/></radialGradient></defs><circle cx="7.5" cy="7.5" r="6.2" fill="url(#shs)" stroke="#222" stroke-width="0.9"/></svg>
<svg class="a" style="left:374px;top:1030px" width="7" height="14"><polygon points="0.5,5.5 3.5,0.5 6.5,5.5" fill="#c8c8c8"/><polygon points="0.5,8 3.5,13 6.5,8" fill="#c8c8c8"/></svg>
<div class="a menu" style="left:390px;top:1027px;width:55px;height:20px"></div>
<div class="a" style="left:425px;top:1028px;width:19px;height:18px;background:linear-gradient(#a9a9a9,#8b8b8b)"></div>
<svg class="a" style="left:393px;top:1029px" width="16" height="16"><circle cx="5.5" cy="5.5" r="4" fill="#e8e8e8" stroke="#222"/><circle cx="10.5" cy="10.5" r="4" fill="#e8e8e8" stroke="#222"/><rect x="6" y="6" width="4" height="4" fill="#fff" stroke="#2a6ad0" stroke-width="1.2"/></svg>
<svg class="a" style="left:415px;top:1030px" width="7" height="14"><polygon points="0.5,5.5 3.5,0.5 6.5,5.5" fill="#c8c8c8"/><polygon points="0.5,8 3.5,13 6.5,8" fill="#c8c8c8"/></svg>
<svg class="a" style="left:426px;top:1029px" width="18" height="16"><g fill="#6a98d8" stroke="#eee" stroke-width="0.9"><circle cx="4" cy="2.5" r="1.7"/><circle cx="9" cy="2.5" r="1.7"/><circle cx="14" cy="2.5" r="1.7"/></g><path d="M2 10 L16 10 M2 10 L5 7 M2 10 L5 13 M16 10 L13 7 M16 10 L13 13" stroke="#111" stroke-width="3" fill="none" stroke-linecap="round"/><path d="M2 10 L16 10 M2 10 L5 7 M2 10 L5 13 M16 10 L13 7 M16 10 L13 13" stroke="#f4f4f4" stroke-width="1.4" fill="none" stroke-linecap="round"/></svg>
<div class="a" style="left:451px;top:1027px;width:151px;height:20px;border:1px solid #262626;border-radius:4px;overflow:hidden;background:linear-gradient(#545454,#363636)"><div class="a" style="left:18px;top:0;width:20px;height:18px;background:linear-gradient(#6c99d8,#4a7cc6)"></div><div class="a" style="left:18px;top:0;width:1px;height:18px;background:#262626"></div><div class="a" style="left:38px;top:0;width:1px;height:18px;background:#262626"></div><div class="a" style="left:58px;top:0;width:1px;height:18px;background:#262626"></div><div class="a" style="left:78px;top:0;width:1px;height:18px;background:#262626"></div></div>
<svg class="a" style="left:451px;top:1028px" width="18" height="18"><g stroke-linecap="round"><path d="M9 10 L9 2" stroke="#111" stroke-width="3"/><path d="M9 10 L3 15" stroke="#111" stroke-width="3"/><path d="M9 10 L15 15" stroke="#111" stroke-width="3"/><path d="M9 10 L9 2" stroke="#4a7af0" stroke-width="1.6"/><path d="M9 10 L3 15" stroke="#e8402a" stroke-width="1.6"/><path d="M9 10 L15 15" stroke="#50d040" stroke-width="1.6"/></g><circle cx="9" cy="10" r="1.3" fill="#f0e040"/></svg>
<svg class="a" style="left:471px;top:1028px" width="18" height="18"><path d="M3.5 14.5 L11 7" stroke="#0e2444" stroke-width="3.6" stroke-linecap="round"/><path d="M9 3 L15 3 L15 9 Z" fill="#0e2444" stroke="#0e2444" stroke-width="2" stroke-linejoin="round"/><path d="M3.5 14.5 L11 7" stroke="#bcd8ff" stroke-width="1.8" stroke-linecap="round"/><path d="M9.5 3.5 L14.5 3.5 L14.5 8.5 Z" fill="#bcd8ff"/></svg>
<svg class="a" style="left:491px;top:1028px" width="18" height="18"><path d="M3.5 15 C4 8 8 4 14.5 3.5" stroke="#1e2e44" stroke-width="3.4" fill="none" stroke-linecap="round"/><path d="M3.5 15 C4 8 8 4 14.5 3.5" stroke="#6890c0" stroke-width="1.8" fill="none" stroke-linecap="round"/></svg>
<svg class="a" style="left:511px;top:1028px" width="18" height="18"><path d="M3.5 14.5 L10 8" stroke="#1e2e44" stroke-width="3.4" stroke-linecap="round"/><rect x="9" y="2.5" width="6.5" height="6.5" fill="#6890c0" stroke="#1e2e44" stroke-width="1"/><path d="M3.5 14.5 L10 8" stroke="#6890c0" stroke-width="1.8" stroke-linecap="round"/></svg>
<div class="a t w" style="left:538px;top:1028px;">Global</div>
<svg class="a" style="left:591px;top:1030px" width="7" height="14"><polygon points="0.5,5.5 3.5,0.5 6.5,5.5" fill="#c8c8c8"/><polygon points="0.5,8 3.5,13 6.5,8" fill="#c8c8c8"/></svg>
<svg class="a" style="left:607px;top:1027px" width="51" height="21"><defs><linearGradient id="lg607" x1="0" y1="0" x2="0" y2="1"><stop offset="0" stop-color="#a6a6a6"/><stop offset="1" stop-color="#8e8e8e"/></linearGradient></defs><rect x="0.5" y="0.5" width="49" height="19" rx="4" fill="url(#lg607)" stroke="#2a2a2a"/><line x1="10.5" y1="0" x2="10.5" y2="20" stroke="#444"/><line x1="20.5" y1="0" x2="20.5" y2="20" stroke="#444"/><line x1="30.5" y1="0" x2="30.5" y2="20" stroke="#444"/><line x1="40.5" y1="0" x2="40.5" y2="20" stroke="#444"/><line x1="0" y1="10" x2="50" y2="10" stroke="#444"/></svg>
<svg class="a" style="left:662px;top:1027px" width="51" height="21"><defs><linearGradient id="lg662" x1="0" y1="0" x2="0" y2="1"><stop offset="0" stop-color="#a6a6a6"/><stop offset="1" stop-color="#8e8e8e"/></linearGradient></defs><rect x="0.5" y="0.5" width="49" height="19" rx="4" fill="url(#lg662)" stroke="#2a2a2a"/><line x1="10.5" y1="0" x2="10.5" y2="20" stroke="#444"/><line x1="20.5" y1="0" x2="20.5" y2="20" stroke="#444"/><line x1="30.5" y1="0" x2="30.5" y2="20" stroke="#444"/><line x1="40.5" y1="0" x2="40.5" y2="20" stroke="#444"/><line x1="0" y1="10" x2="50" y2="10" stroke="#444"/></svg>
<div class="a" style="left:609px;top:1029px;width:5px;height:5px;background:#f08a20;border:1px solid #3a1a00;border-radius:1px"></div>
<div class="a menu" style="left:718px;top:1027px;width:19px;height:20px"></div>
<div class="a tool" style="left:743px;top:1027px;width:19px;height:20px"></div>
<div class="a" style="left:768px;top:1027px;width:54px;height:20px;border:1px solid #262626;border-radius:4px;overflow:hidden;background:linear-gradient(#545454,#363636)"><div class="a" style="left:0;top:0;width:19px;height:18px;background:linear-gradient(#a9a9a9,#8b8b8b)"></div></div>
<div class="a" style="left:827px;top:1027px;width:40px;height:20px;border:1px solid #262626;border-radius:4px;overflow:hidden;background:linear-gradient(#a9a9a9,#8b8b8b)"><div class="a" style="left:19px;top:0;width:1px;height:18px;background:#262626"></div></div>
<svg class="a" style="left:719px;top:1029px" width="17" height="16"><defs><linearGradient id="lkg" x1="0" y1="0" x2="1" y2="1"><stop offset="0" stop-color="#ddd"/><stop offset="1" stop-color="#888"/></linearGradient></defs><rect x="2.5" y="2.5" width="9" height="10" fill="url(#lkg)" stroke="#222"/><rect x="11" y="5" width="3.2" height="4" rx="1.6" fill="none" stroke="#111" stroke-width="2.4"/><rect x="11" y="9" width="3.2" height="4" rx="1.6" fill="none" stroke="#111" stroke-width="2.4"/><rect x="11" y="5" width="3.2" height="4" rx="1.6" fill="none" stroke="#eee" stroke-width="1"/><rect x="11" y="9" width="3.2" height="4" rx="1.6" fill="none" stroke="#eee" stroke-width="1"/></svg>
<svg class="a" style="left:745px;top:1029px" width="16" height="16"><circle cx="8" cy="8" r="5.8" fill="none" stroke="#7a7a7a" stroke-width="1.2"/><circle cx="8" cy="8" r="3.2" fill="none" stroke="#7a7a7a" stroke-width="1.2"/></svg>
<svg class="a" style="left:769px;top:1029px" width="17" height="16"><path d="M4 12 L9.5 6.5 A2.5 2.5 0 0 1 13 10 L7.5 15.5" fill="none" stroke="#6a6a6a" stroke-width="3.2"/><path d="M4 12 L10 6 M12 3 A5 5 0 0 1 14.5 12" fill="none" stroke="#bbb" stroke-width="1"/></svg>
<svg class="a" style="left:788px;top:1028px" width="18" height="18"><path d="M4.5 8 L4.5 17 M10.5 8 L10.5 17 M1 11 L15 11 M1 15 L15 15" stroke="#111" stroke-width="2.6"/><path d="M4.5 8 L4.5 17 M10.5 8 L10.5 17 M1 11 L15 11 M1 15 L15 15" stroke="#eee" stroke-width="1.1"/><circle cx="6" cy="5" r="3.6" fill="#fff" stroke="#111" stroke-width="0.8"/><circle cx="6" cy="5" r="2" fill="#3a78d8"/></svg>
<svg class="a" style="left:812px;top:1030px" width="7" height="14"><polygon points="0.5,5.5 3.5,0.5 6.5,5.5" fill="#c8c8c8"/><polygon points="0.5,8 3.5,13 6.5,8" fill="#c8c8c8"/></svg>
<svg class="a" style="left:828px;top:1028px" width="18" height="18"><rect x="1.5" y="6" width="14" height="10" rx="1.5" fill="#ccc" stroke="#222"/><rect x="4" y="4" width="5" height="2.5" fill="#bbb" stroke="#222" stroke-width="0.8"/><circle cx="9" cy="11" r="3.6" fill="#333" stroke="#111"/><circle cx="9" cy="11" r="1.8" fill="#b04828"/><path d="M14 1 L14 7 M11 4 L17 4" stroke="#f0a020" stroke-width="2"/></svg>
<svg class="a" style="left:848px;top:1028px" width="18" height="18"><rect x="2" y="8" width="13" height="8" fill="#d8d8d8" stroke="#222"/><path d="M2 7.5 L15 3 L16 6.5 L3 11 Z" fill="#e8e8e8" stroke="#222" stroke-width="0.9"/><path d="M5 6.5 L7 9 M9 5 L11 7.5 M13 3.5 L15 6" stroke="#222" stroke-width="1.2"/><path d="M3 11.5 L3 15" stroke="#4a80d0" stroke-width="2"/></svg>
<div class="a " style="left:19px;top:27px;width:140px;height:1px;background:#858585"></div>
<div class="a " style="left:1161px;top:27px;width:256px;height:1px;background:#858585"></div>
<div class="a " style="left:1421px;top:27px;width:259px;height:1px;background:#858585"></div>
<div class="a " style="left:1421px;top:258px;width:259px;height:1px;background:#858585"></div>
<div class="a " style="left:1421px;top:27px;width:1px;height:1023px;background:#858585"></div>
<svg class="a" style="left:0px;top:13px" width="13" height="13"><clipPath id="c0_13"><polygon points="0,0 0,13 13,13"/></clipPath><g clip-path="url(#c0_13)"><line x1="0" y1="0" x2="13" y2="13" stroke="#000" stroke-width="1.3"/><line x1="-2" y1="0" x2="11" y2="13" stroke="#aaa" stroke-width="1.3"/><line x1="-4" y1="0" x2="9" y2="13" stroke="#000" stroke-width="1.3"/><line x1="-6" y1="0" x2="7" y2="13" stroke="#999" stroke-width="1.3"/><line x1="-8" y1="0" x2="5" y2="13" stroke="#000" stroke-width="1.3"/><line x1="-10" y1="0" x2="3" y2="13" stroke="#999" stroke-width="1.3"/></g></svg>
<svg class="a" style="left:1667px;top:0px" width="13" height="13"><clipPath id="c1667_0"><polygon points="0,0 13,0 13,13"/></clipPath><g clip-path="url(#c1667_0)"><line x1="0" y1="0" x2="13" y2="13" stroke="#aaa" stroke-width="1.3"/><line x1="2" y1="0" x2="15" y2="13" stroke="#000" stroke-width="1.3"/><line x1="4" y1="0" x2="17" y2="13" stroke="#999" stroke-width="1.3"/><line x1="6" y1="0" x2="19" y2="13" stroke="#000" stroke-width="1.3"/><line x1="8" y1="0" x2="21" y2="13" stroke="#999" stroke-width="1.3"/><line x1="10" y1="0" x2="23" y2="13" stroke="#000" stroke-width="1.3"/></g></svg>
<svg class="a" style="left:1672px;top:33px" width="7" height="14"><polygon points="0.5,5.5 3.5,0.5 6.5,5.5" fill="#c8c8c8"/><polygon points="0.5,8 3.5,13 6.5,8" fill="#c8c8c8"/></svg>
<svg class="a" style="left:1406px;top:27px" width="14" height="14"><clipPath id="c1406_27"><polygon points="0,0 14,0 14,14"/></clipPath><g clip-path="url(#c1406_27)"><line x1="0" y1="0" x2="14" y2="14" stroke="#aaa" stroke-width="1.3"/><line x1="2" y1="0" x2="16" y2="14" stroke="#000" stroke-width="1.3"/><line x1="4" y1="0" x2="18" y2="14" stroke="#999" stroke-width="1.3"/><line x1="6" y1="0" x2="20" y2="14" stroke="#000" stroke-width="1.3"/><line x1="8" y1="0" x2="22" y2="14" stroke="#999" stroke-width="1.3"/><line x1="10" y1="0" x2="24" y2="14" stroke="#000" stroke-width="1.3"/></g></svg>
<svg class="a" style="left:1667px;top:27px" width="13" height="13"><clipPath id="c1667_27"><polygon points="0,0 13,0 13,13"/></clipPath><g clip-path="url(#c1667_27)"><line x1="0" y1="0" x2="13" y2="13" stroke="#aaa" stroke-width="1.3"/><line x1="2" y1="0" x2="15" y2="13" stroke="#000" stroke-width="1.3"/><line x1="4" y1="0" x2="17" y2="13" stroke="#999" stroke-width="1.3"/><line x1="6" y1="0" x2="19" y2="13" stroke="#000" stroke-width="1.3"/><line x1="8" y1="0" x2="21" y2="13" stroke="#999" stroke-width="1.3"/><line x1="10" y1="0" x2="23" y2="13" stroke="#000" stroke-width="1.3"/></g></svg>
<svg class="a" style="left:1421px;top:244px" width="13" height="13"><clipPath id="c1421_244"><polygon points="0,0 0,13 13,13"/></clipPath><g clip-path="url(#c1421_244)"><line x1="0" y1="0" x2="13" y2="13" stroke="#000" stroke-width="1.3"/><line x1="-2" y1="0" x2="11" y2="13" stroke="#aaa" stroke-width="1.3"/><line x1="-4" y1="0" x2="9" y2="13" stroke="#000" stroke-width="1.3"/><line x1="-6" y1="0" x2="7" y2="13" stroke="#999" stroke-width="1.3"/><line x1="-8" y1="0" x2="5" y2="13" stroke="#000" stroke-width="1.3"/><line x1="-10" y1="0" x2="3" y2="13" stroke="#999" stroke-width="1.3"/></g></svg>
<svg class="a" style="left:1667px;top:258px" width="13" height="13"><clipPath id="c1667_258"><polygon points="0,0 13,0 13,13"/></clipPath><g clip-path="url(#c1667_258)"><line x1="0" y1="0" x2="13" y2="13" stroke="#aaa" stroke-width="1.3"/><line x1="2" y1="0" x2="15" y2="13" stroke="#000" stroke-width="1.3"/><line x1="4" y1="0" x2="17" y2="13" stroke="#999" stroke-width="1.3"/><line x1="6" y1="0" x2="19" y2="13" stroke="#000" stroke-width="1.3"/><line x1="8" y1="0" x2="21" y2="13" stroke="#999" stroke-width="1.3"/><line x1="10" y1="0" x2="23" y2="13" stroke="#000" stroke-width="1.3"/></g></svg>
<svg class="a" style="left:0px;top:1037px" width="13" height="13"><clipPath id="c0_1037"><polygon points="0,0 0,13 13,13"/></clipPath><g clip-path="url(#c0_1037)"><line x1="0" y1="0" x2="13" y2="13" stroke="#000" stroke-width="1.3"/><line x1="-2" y1="0" x2="11" y2="13" stroke="#aaa" stroke-width="1.3"/><line x1="-4" y1="0" x2="9" y2="13" stroke="#000" stroke-width="1.3"/><line x1="-6" y1="0" x2="7" y2="13" stroke="#999" stroke-width="1.3"/><line x1="-8" y1="0" x2="5" y2="13" stroke="#000" stroke-width="1.3"/><line x1="-10" y1="0" x2="3" y2="13" stroke="#999" stroke-width="1.3"/></g></svg>
<svg class="a" style="left:1421px;top:1037px" width="13" height="13"><clipPath id="c1421_1037"><polygon points="0,0 0,13 13,13"/></clipPath><g clip-path="url(#c1421_1037)"><line x1="0" y1="0" x2="13" y2="13" stroke="#000" stroke-width="1.3"/><line x1="-2" y1="0" x2="11" y2="13" stroke="#aaa" stroke-width="1.3"/><line x1="-4" y1="0" x2="9" y2="13" stroke="#000" stroke-width="1.3"/><line x1="-6" y1="0" x2="7" y2="13" stroke="#999" stroke-width="1.3"/><line x1="-8" y1="0" x2="5" y2="13" stroke="#000" stroke-width="1.3"/><line x1="-10" y1="0" x2="3" y2="13" stroke="#999" stroke-width="1.3"/></g></svg></body></html>
